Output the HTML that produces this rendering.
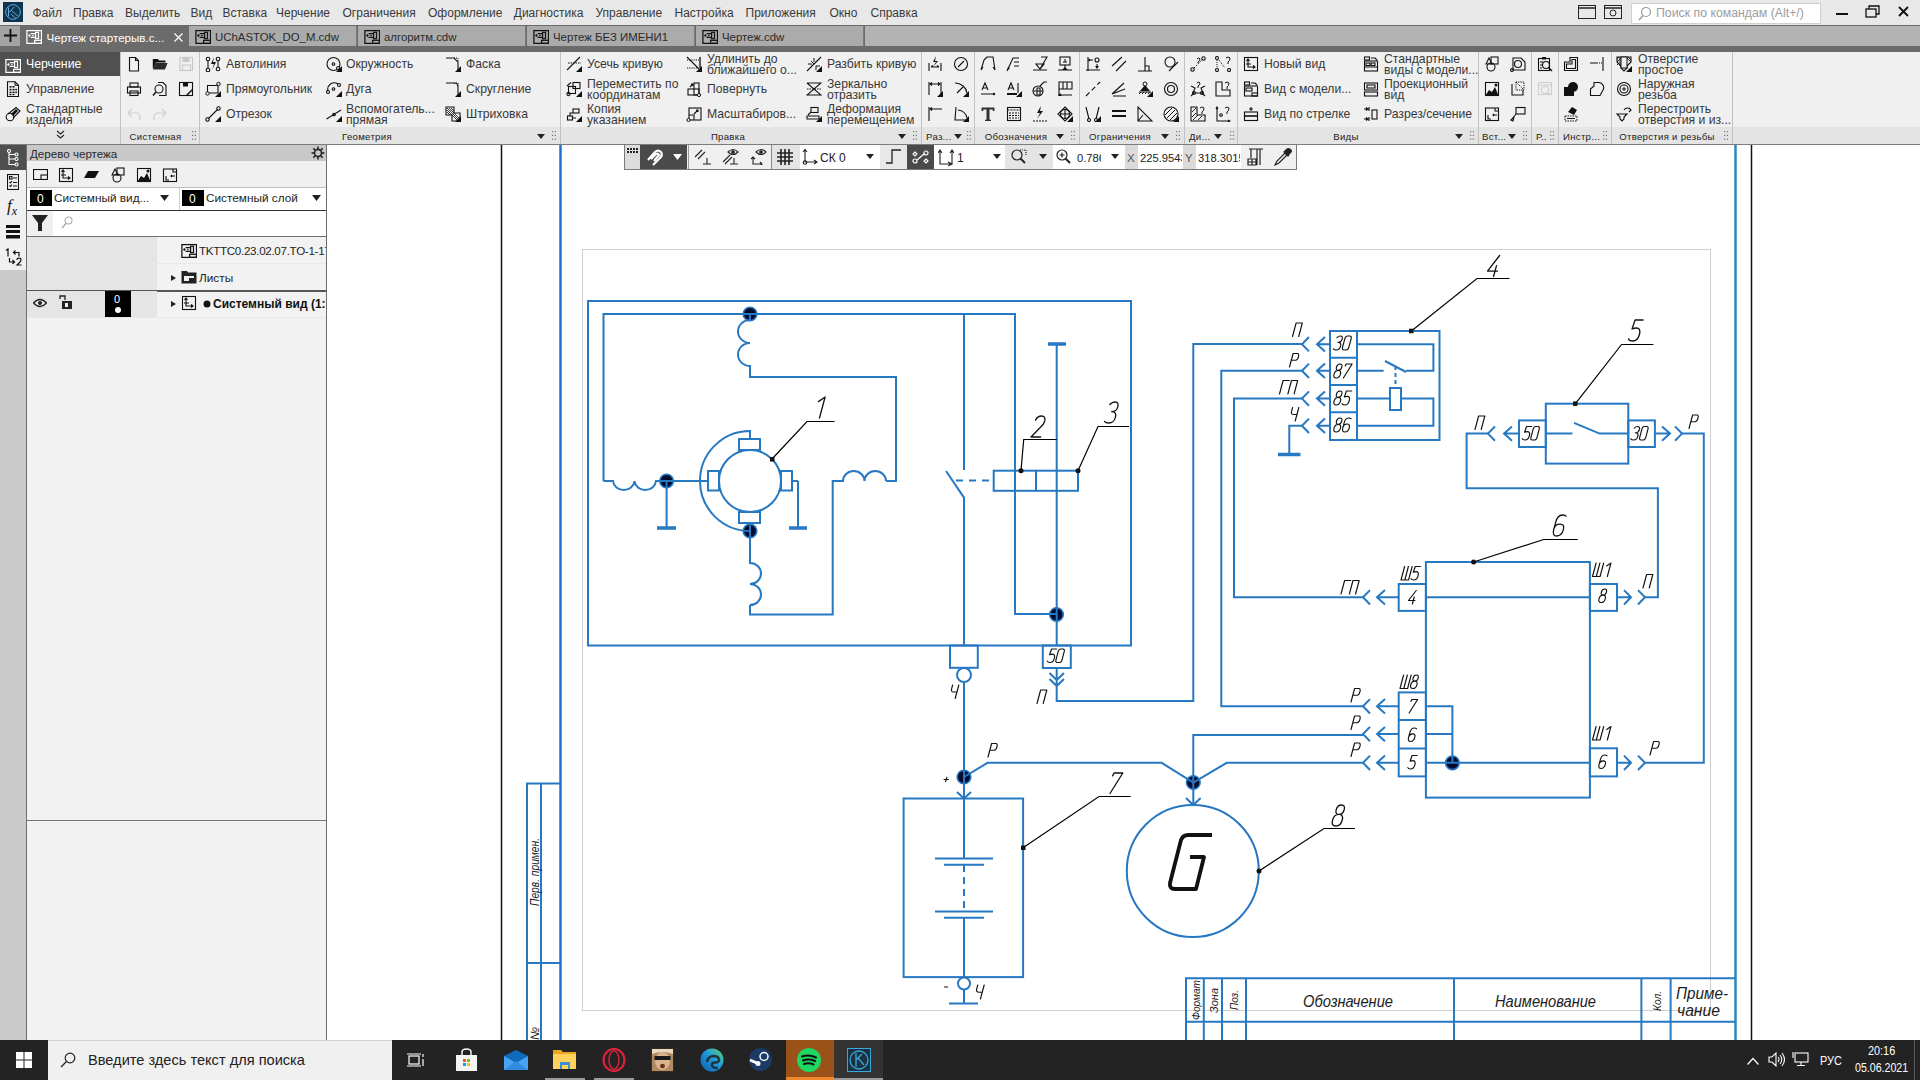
<!DOCTYPE html>
<html><head><meta charset="utf-8">
<style>
*{box-sizing:border-box}
html,body{margin:0;padding:0}
body{width:1920px;height:1080px;position:relative;overflow:hidden;font-family:"Liberation Sans",sans-serif;font-size:12px;color:#222;background:#fff}
.a{position:absolute}
</style></head><body>
<div class="a" style="left:327px;top:145px;width:1593px;height:895px;background:#fff"></div>

<svg id="dwg" width="1920" height="1080" style="position:absolute;left:0;top:0" viewBox="0 0 1920 1080">
<defs>
<style>
.b{stroke:#2778c2;stroke-width:2;fill:none}
.bt{stroke:#2778c2;stroke-width:3.5;fill:none}
.k{stroke:#000;stroke-width:1.2;fill:none}
.t{font-family:"Liberation Sans",sans-serif;font-style:italic;fill:#1a1a1a}
.nd{fill:#030b2e;stroke:#2778c2;stroke-width:1.6}
.dt{fill:#111}
</style>
</defs>
<!-- sheet frame -->
<line x1="501.5" y1="145" x2="501.5" y2="1040" stroke="#111" stroke-width="1.5"/>
<line x1="1751.5" y1="145" x2="1751.5" y2="1040" stroke="#111" stroke-width="1.5"/>
<line x1="560.5" y1="145" x2="560.5" y2="1040" stroke="#1f74d0" stroke-width="2.5"/>
<line x1="1735.5" y1="145" x2="1735.5" y2="1040" stroke="#2a88b8" stroke-width="2.5"/>
<rect x="582.5" y="249.5" width="1128" height="761" fill="none" stroke="#cfcfcf" stroke-width="1"/>
<!-- left stamp -->
<path class="b" d="M527 1040 V783.5 H560 M541 783.5 V1040 M527 963 H560"/>
<!-- nodes -->
<circle class="nd" cx="750" cy="314" r="6.8"/>
<circle class="nd" cx="666.6" cy="481" r="6.8"/>
<circle class="nd" cx="750" cy="531" r="6.8"/>
<circle class="nd" cx="1056.5" cy="614.5" r="6.8"/>
<circle class="nd" cx="964" cy="777" r="6.8"/>
<circle class="nd" cx="1193.3" cy="782.5" r="6.8"/>
<circle class="nd" cx="1452.4" cy="762.8" r="6.8"/>
<!-- BLOCK 1 -->
<rect class="b" x="588" y="301" width="543" height="344.5"/>
<path class="b" d="M603.5 481 V314 H1015 V614 H1056"/>
<!-- top coil -->
<path class="b" d="M750 314 V320 A12 11.5 0 0 0 750 343 A12 11.5 0 0 0 750 366 V377 H896 V481 H886"/>
<path class="b" d="M886 481 A10.7 10 0 0 0 864.5 481 A10.7 10 0 0 0 843 481 H832.7 V614.4 H750 V605"/>
<path class="b" d="M750 605 A11 10.5 0 0 0 750 584 A11 10.5 0 0 0 750 563 V523"/>
<path class="b" d="M603.5 481 H613 A10.8 10 0 0 0 634.5 481 A10.8 10 0 0 0 656 481 H708"/>
<path class="b" d="M666.6 481 V528 M798 481 V528 M792 481 H798"/>
<path class="bt" d="M657 528 H676 M789 528 H807"/>
<circle class="b" cx="750" cy="481" r="31"/>
<rect class="b" x="708" y="471" width="11" height="19.5"/>
<rect class="b" x="781" y="471" width="11" height="19.5"/>
<rect class="b" x="739" y="439" width="21" height="11"/>
<rect class="b" x="739" y="512" width="21" height="11"/>
<path class="b" d="M750 439 V431 A50 50 0 0 0 750 531"/>



<!-- switch -->
<path class="b" d="M964 314 V470 M946 471 L964 497.6 V645.5"/>
<path class="b" d="M956 480.6 H993.7" stroke-dasharray="7,6"/>
<path class="bt" d="M1048 344 H1066"/>
<path class="b" d="M1056.7 344 V645.5"/>
<rect class="b" x="993.7" y="470.7" width="84.3" height="20.1"/>
<path class="b" d="M1036 470.7 V490.8"/>

<!-- leaders 1,2,3 -->
<path class="k" d="M772 459 L807 421.5 H834.5 M1021 470.7 L1023.7 439.5 H1056.7 M1078 470.7 L1098 426.5 H1129"/>
<rect class="dt" x="770" y="457" width="4.5" height="4.5"/>
<circle class="dt" cx="1021" cy="470.7" r="2.5"/><circle class="dt" cx="1078" cy="470.7" r="2.5"/>
<!-- connectors below -->
<rect class="b" x="950" y="645.5" width="27.8" height="22.3"/>
<circle class="b" cx="964" cy="675" r="7"/>
<path class="b" d="M964 682 V777"/>
<rect class="b" x="1042.8" y="645.5" width="28" height="22.5"/>
<path class="b" d="M1049.5 673 L1056.7 680 L1064 673 M1049.5 679 L1056.7 686 L1064 679 M1056.7 668 V701 H1193.3 V344 H1302"/>
<!-- battery wires -->
<path class="b" d="M964 777 L987.5 762.8 H1161.7 L1193.3 782.5 L1226.7 762.8 H1363"/>
<path class="b" d="M1193.3 782.5 V735 H1363 M1193.3 782.5 V805"/>
<path class="b" d="M964 777 V798.5 M957 792 L964 798.5 L971 792 M1186 798 L1193.3 805 L1200.6 798"/>


<!-- BLOCK 7 battery -->
<rect class="b" x="903.6" y="798.5" width="119.5" height="178.6"/>
<path class="b" d="M964 798.5 V858.6 M935 858.6 H993 M944 864.8 H984 M935 911.5 H993 M944 917.7 H984 M964 917.7 V977"/>
<path class="b" d="M964 865 V911.5" stroke-dasharray="7,5"/>
<circle class="b" cx="964" cy="983.5" r="6"/>
<path class="b" d="M964 989.5 V1003.4 M949 1003.4 H978"/>
<path class="k" d="M1023 847.7 L1099 796.5 H1130.7"/>
<rect class="dt" x="1021" y="845.5" width="4.5" height="4.5"/>
<!-- BLOCK 8 generator -->
<circle class="b" cx="1192.8" cy="871" r="66"/>
<path d="M1212 835 H1188 Q1183 835 1181 840 L1170 883 Q1169 889 1175 889 H1196 L1204 857 H1190" stroke="#111" stroke-width="3.8" fill="none" stroke-linejoin="round"/>
<path class="k" d="M1259 871 L1324 828.5 H1355"/>
<circle class="dt" cx="1259" cy="871" r="2.5"/>
<!-- BLOCK 4 relay -->
<rect class="b" x="1330" y="331" width="109.5" height="109"/>
<path class="b" d="M1357 331 V440 M1330 357.8 H1357 M1330 385 H1357 M1330 412.2 H1357"/>
<path class="b" d="M1357 344.2 H1433.4 V370.8 H1406 M1357 370.8 H1383.6 M1385 361 L1406 372"/>
<path class="b" d="M1395.5 366 V388" stroke-dasharray="4,3"/>
<rect class="b" x="1390" y="388" width="11" height="22"/>
<path class="b" d="M1357 398.6 H1390 M1401 398.6 H1433.4 V425.8 H1357"/>
<!-- chevrons relay -->
<g class="b">
<path d="M1330 344.2 H1317 M1325 337 L1317 344.2 L1325 351.4 M1309 337 L1302 344.2 L1309 351.4"/>
<path d="M1330 370.8 H1317 M1325 363.6 L1317 370.8 L1325 378 M1309 363.6 L1302 370.8 L1309 378"/>
<path d="M1330 398.6 H1317 M1325 391.4 L1317 398.6 L1325 405.8 M1309 391.4 L1302 398.6 L1309 405.8"/>
<path d="M1330 425.8 H1317 M1325 418.6 L1317 425.8 L1325 433 M1309 418.6 L1302 425.8 L1309 433"/>
</g>
<path class="b" d="M1302 370.8 H1221.3 V706.3 H1363 M1302 398.6 H1234 V597.3 H1363 M1302 425.8 H1289.3 V454.5"/>
<path class="bt" d="M1278 454.5 H1300.5"/>
<path class="k" d="M1411.4 331 L1477 278.5 H1509.5"/>
<rect class="dt" x="1409" y="328.7" width="4.5" height="4.5"/>
<!-- BLOCK 5 -->
<rect class="b" x="1545.8" y="403.7" width="82.5" height="59.9"/>
<rect class="b" x="1519" y="420.4" width="26.8" height="26.6"/>
<rect class="b" x="1628.3" y="420.4" width="26.6" height="26.6"/>
<path class="b" d="M1545.8 433.6 H1572.4 M1574 422.8 L1599.6 433.6 H1628.3"/>
<g class="b">
<path d="M1519 433.6 H1504 M1512 426.4 L1504 433.6 L1512 440.8 M1495 426.4 L1488 433.6 L1495 440.8"/>
<path d="M1655 433.6 H1670 M1662 426.4 L1670 433.6 L1662 440.8 M1675 426.4 L1682 433.6 L1675 440.8"/>
</g>
<path class="b" d="M1488 433.6 H1466.6 V488.3 H1657.9 V597.3 H1645 M1682 433.6 H1703.8 V762.8 H1645"/>
<path class="k" d="M1575.4 403.7 L1621.6 344.5 H1653.4"/>
<rect class="dt" x="1573" y="401.4" width="4.5" height="4.5"/>
<!-- BLOCK 6 -->
<rect class="b" x="1425.9" y="562" width="164" height="235.6"/>
<rect class="b" x="1398.7" y="584" width="27.2" height="26.9"/>
<rect class="b" x="1589.9" y="584" width="27.1" height="26.9"/>
<path class="b" d="M1425.9 597.3 H1589.9"/>
<rect class="b" x="1398.7" y="692.4" width="27.2" height="84"/>
<path class="b" d="M1398.7 720 H1425.9 M1398.7 748.5 H1425.9"/>
<rect class="b" x="1589.9" y="748.3" width="27.1" height="28.1"/>
<path class="b" d="M1425.9 706.3 H1452.4 V762.8 M1425.9 734.1 H1452.4 M1425.9 762.8 H1589.9"/>

<g class="b">
<path d="M1398.7 597.3 H1377 M1385 590.1 L1377 597.3 L1385 604.5 M1370 590.1 L1363 597.3 L1370 604.5"/>
<path d="M1398.7 706.3 H1377 M1385 699.1 L1377 706.3 L1385 713.5 M1370 699.1 L1363 706.3 L1370 713.5"/>
<path d="M1398.7 734.1 H1377 M1385 726.9 L1377 734.1 L1385 741.3 M1370 726.9 L1363 734.1 L1370 741.3"/>
<path d="M1398.7 762.8 H1377 M1385 755.6 L1377 762.8 L1385 770 M1370 755.6 L1363 762.8 L1370 770"/>
<path d="M1617 597.3 H1631 M1624 590.1 L1631 597.3 L1624 604.5 M1638 590.1 L1645 597.3 L1638 604.5"/>
<path d="M1617 762.8 H1631 M1624 755.6 L1631 762.8 L1624 770 M1638 755.6 L1645 762.8 L1638 770"/>
</g>
<path class="k" d="M1473.6 562 L1543.7 539.5 H1577.8"/>
<circle class="dt" cx="1473.6" cy="562" r="2.5"/>
<!-- stamp table -->
<path class="b" d="M1186 1040 V978.3 H1735.3 M1186 1021.7 H1735.3 M1203.8 978.3 V1040 M1222 978.3 V1040 M1246 978.3 V1040 M1454 978.3 V1040 M1641.4 978.3 V1040 M1670.6 978.3 V1040"/>
</svg>

<svg class="a" style="left:0;top:0" width="1920" height="1080" viewBox="0 0 1920 1080"><g transform="translate(811.50 418.00) skewX(-15) scale(2.100) translate(0 -10)" fill="none" stroke="#111" stroke-width="1.3" vector-effect="non-scaling-stroke" stroke-linejoin="round" stroke-linecap="round"><path vector-effect="non-scaling-stroke" transform="translate(0.00 0)" d="M1.2 2.2 L3.8 0 V10"/></g>
<g transform="translate(1031.00 437.00) skewX(-15) scale(2.100) translate(0 -10)" fill="none" stroke="#111" stroke-width="1.3" vector-effect="non-scaling-stroke" stroke-linejoin="round" stroke-linecap="round"><path vector-effect="non-scaling-stroke" transform="translate(0.00 0)" d="M0 2 Q0.4 0 2.3 0 Q4.5 0 4.5 2.5 Q4.5 4 3.2 5.5 L0 10 H4.6"/></g>
<g transform="translate(1104.00 423.00) skewX(-15) scale(2.100) translate(0 -10)" fill="none" stroke="#111" stroke-width="1.3" vector-effect="non-scaling-stroke" stroke-linejoin="round" stroke-linecap="round"><path vector-effect="non-scaling-stroke" transform="translate(0.00 0)" d="M0.4 1.2 Q1.2 0 2.6 0 Q4.5 0 4.5 2.3 Q4.5 4.6 2.2 4.6 Q4.7 4.6 4.7 7.3 Q4.7 10 2.3 10 Q0.8 10 0 9.2"/></g>
<g transform="translate(1486.00 276.50) skewX(-15) scale(2.100) translate(0 -10)" fill="none" stroke="#111" stroke-width="1.3" vector-effect="non-scaling-stroke" stroke-linejoin="round" stroke-linecap="round"><path vector-effect="non-scaling-stroke" transform="translate(0.00 0)" d="M3.8 0 L0 7.4 H4.8 M3.6 4.8 V10"/></g>
<g transform="translate(1628.00 341.00) skewX(-15) scale(2.100) translate(0 -10)" fill="none" stroke="#111" stroke-width="1.3" vector-effect="non-scaling-stroke" stroke-linejoin="round" stroke-linecap="round"><path vector-effect="non-scaling-stroke" transform="translate(0.00 0)" d="M4.5 0 H0.7 L0.4 4.3 Q1.3 3.8 2.3 3.8 Q4.6 3.8 4.6 6.9 Q4.6 10 2.3 10 Q0.5 10 0 9"/></g>
<g transform="translate(1552.00 536.00) skewX(-15) scale(2.100) translate(0 -10)" fill="none" stroke="#111" stroke-width="1.3" vector-effect="non-scaling-stroke" stroke-linejoin="round" stroke-linecap="round"><path vector-effect="non-scaling-stroke" transform="translate(0.00 0)" d="M4.2 0.6 Q3.7 0 2.3 0 Q0 0 0 3.5 V7 Q0 10 2.3 10 Q4.6 10 4.6 7 Q4.6 4.3 2.3 4.3 Q0 4.3 0 6.5"/></g>
<g transform="translate(1107.50 793.50) skewX(-15) scale(2.050) translate(0 -10)" fill="none" stroke="#111" stroke-width="1.3" vector-effect="non-scaling-stroke" stroke-linejoin="round" stroke-linecap="round"><path vector-effect="non-scaling-stroke" transform="translate(0.00 0)" d="M0.2 1.4 L0.5 0 H4.8 L1.2 10"/></g>
<g transform="translate(1331.00 826.00) skewX(-15) scale(2.100) translate(0 -10)" fill="none" stroke="#111" stroke-width="1.3" vector-effect="non-scaling-stroke" stroke-linejoin="round" stroke-linecap="round"><path vector-effect="non-scaling-stroke" transform="translate(0.00 0)" d="M2.3 4.5 Q0.4 4.5 0.4 2.25 Q0.4 0 2.3 0 Q4.2 0 4.2 2.25 Q4.2 4.5 2.3 4.5 Q0 4.5 0 7.25 Q0 10 2.3 10 Q4.6 10 4.6 7.25 Q4.6 4.5 2.3 4.5 Z"/></g>
<g transform="translate(1292.50 336.50) skewX(-15) scale(1.350) translate(0 -10)" fill="none" stroke="#111" stroke-width="1.15" vector-effect="non-scaling-stroke" stroke-linejoin="round" stroke-linecap="round"><path vector-effect="non-scaling-stroke" transform="translate(0.00 0)" d="M0 10 V0 H4.6 V10"/></g>
<g transform="translate(1289.50 367.00) skewX(-15) scale(1.350) translate(0 -10)" fill="none" stroke="#111" stroke-width="1.15" vector-effect="non-scaling-stroke" stroke-linejoin="round" stroke-linecap="round"><path vector-effect="non-scaling-stroke" transform="translate(0.00 0)" d="M0 10 V0 H3.2 Q4.6 0 4.6 2.5 Q4.6 5 3.2 5 H0"/></g>
<g transform="translate(1279.50 394.00) skewX(-15) scale(1.350) translate(0 -10)" fill="none" stroke="#111" stroke-width="1.15" vector-effect="non-scaling-stroke" stroke-linejoin="round" stroke-linecap="round"><path vector-effect="non-scaling-stroke" transform="translate(0.00 0)" d="M0 10 V0 H4.6"/><path vector-effect="non-scaling-stroke" transform="translate(6.20 0)" d="M0 10 V0 H4.6 V10"/></g>
<g transform="translate(1289.00 421.00) skewX(-15) scale(1.350) translate(0 -10)" fill="none" stroke="#111" stroke-width="1.15" vector-effect="non-scaling-stroke" stroke-linejoin="round" stroke-linecap="round"><path vector-effect="non-scaling-stroke" transform="translate(0.00 0)" d="M0 0 V2.8 Q0 5.2 2.3 5.2 H4.6 M4.6 0 V10"/></g>
<g transform="translate(1333.00 350.00) skewX(-15) scale(1.400) translate(0 -10)" fill="none" stroke="#111" stroke-width="1.15" vector-effect="non-scaling-stroke" stroke-linejoin="round" stroke-linecap="round"><path vector-effect="non-scaling-stroke" transform="translate(0.00 0)" d="M0.4 1.2 Q1.2 0 2.6 0 Q4.5 0 4.5 2.3 Q4.5 4.6 2.2 4.6 Q4.7 4.6 4.7 7.3 Q4.7 10 2.3 10 Q0.8 10 0 9.2"/><path vector-effect="non-scaling-stroke" transform="translate(6.30 0)" d="M1.4 0 H3.1 Q4.5 0 4.5 2 V8 Q4.5 10 3.1 10 H1.4 Q0 10 0 8 V2 Q0 0 1.4 0 Z"/></g>
<g transform="translate(1333.00 378.00) skewX(-15) scale(1.400) translate(0 -10)" fill="none" stroke="#111" stroke-width="1.15" vector-effect="non-scaling-stroke" stroke-linejoin="round" stroke-linecap="round"><path vector-effect="non-scaling-stroke" transform="translate(0.00 0)" d="M2.3 4.5 Q0.4 4.5 0.4 2.25 Q0.4 0 2.3 0 Q4.2 0 4.2 2.25 Q4.2 4.5 2.3 4.5 Q0 4.5 0 7.25 Q0 10 2.3 10 Q4.6 10 4.6 7.25 Q4.6 4.5 2.3 4.5 Z"/><path vector-effect="non-scaling-stroke" transform="translate(6.20 0)" d="M0.2 1.4 L0.5 0 H4.8 L1.2 10"/></g>
<g transform="translate(1333.00 405.00) skewX(-15) scale(1.400) translate(0 -10)" fill="none" stroke="#111" stroke-width="1.15" vector-effect="non-scaling-stroke" stroke-linejoin="round" stroke-linecap="round"><path vector-effect="non-scaling-stroke" transform="translate(0.00 0)" d="M2.3 4.5 Q0.4 4.5 0.4 2.25 Q0.4 0 2.3 0 Q4.2 0 4.2 2.25 Q4.2 4.5 2.3 4.5 Q0 4.5 0 7.25 Q0 10 2.3 10 Q4.6 10 4.6 7.25 Q4.6 4.5 2.3 4.5 Z"/><path vector-effect="non-scaling-stroke" transform="translate(6.20 0)" d="M4.5 0 H0.7 L0.4 4.3 Q1.3 3.8 2.3 3.8 Q4.6 3.8 4.6 6.9 Q4.6 10 2.3 10 Q0.5 10 0 9"/></g>
<g transform="translate(1333.00 432.00) skewX(-15) scale(1.400) translate(0 -10)" fill="none" stroke="#111" stroke-width="1.15" vector-effect="non-scaling-stroke" stroke-linejoin="round" stroke-linecap="round"><path vector-effect="non-scaling-stroke" transform="translate(0.00 0)" d="M2.3 4.5 Q0.4 4.5 0.4 2.25 Q0.4 0 2.3 0 Q4.2 0 4.2 2.25 Q4.2 4.5 2.3 4.5 Q0 4.5 0 7.25 Q0 10 2.3 10 Q4.6 10 4.6 7.25 Q4.6 4.5 2.3 4.5 Z"/><path vector-effect="non-scaling-stroke" transform="translate(6.20 0)" d="M4.2 0.6 Q3.7 0 2.3 0 Q0 0 0 3.5 V7 Q0 10 2.3 10 Q4.6 10 4.6 7 Q4.6 4.3 2.3 4.3 Q0 4.3 0 6.5"/></g>
<g transform="translate(1475.00 429.50) skewX(-15) scale(1.350) translate(0 -10)" fill="none" stroke="#111" stroke-width="1.15" vector-effect="non-scaling-stroke" stroke-linejoin="round" stroke-linecap="round"><path vector-effect="non-scaling-stroke" transform="translate(0.00 0)" d="M0 10 V0 H4.6 V10"/></g>
<g transform="translate(1522.00 440.00) skewX(-15) scale(1.350) translate(0 -10)" fill="none" stroke="#111" stroke-width="1.15" vector-effect="non-scaling-stroke" stroke-linejoin="round" stroke-linecap="round"><path vector-effect="non-scaling-stroke" transform="translate(0.00 0)" d="M4.5 0 H0.7 L0.4 4.3 Q1.3 3.8 2.3 3.8 Q4.6 3.8 4.6 6.9 Q4.6 10 2.3 10 Q0.5 10 0 9"/><path vector-effect="non-scaling-stroke" transform="translate(6.10 0)" d="M1.4 0 H3.1 Q4.5 0 4.5 2 V8 Q4.5 10 3.1 10 H1.4 Q0 10 0 8 V2 Q0 0 1.4 0 Z"/></g>
<g transform="translate(1630.50 440.00) skewX(-15) scale(1.350) translate(0 -10)" fill="none" stroke="#111" stroke-width="1.15" vector-effect="non-scaling-stroke" stroke-linejoin="round" stroke-linecap="round"><path vector-effect="non-scaling-stroke" transform="translate(0.00 0)" d="M0.4 1.2 Q1.2 0 2.6 0 Q4.5 0 4.5 2.3 Q4.5 4.6 2.2 4.6 Q4.7 4.6 4.7 7.3 Q4.7 10 2.3 10 Q0.8 10 0 9.2"/><path vector-effect="non-scaling-stroke" transform="translate(6.30 0)" d="M1.4 0 H3.1 Q4.5 0 4.5 2 V8 Q4.5 10 3.1 10 H1.4 Q0 10 0 8 V2 Q0 0 1.4 0 Z"/></g>
<g transform="translate(1689.00 428.50) skewX(-15) scale(1.350) translate(0 -10)" fill="none" stroke="#111" stroke-width="1.15" vector-effect="non-scaling-stroke" stroke-linejoin="round" stroke-linecap="round"><path vector-effect="non-scaling-stroke" transform="translate(0.00 0)" d="M0 10 V0 H3.2 Q4.6 0 4.6 2.5 Q4.6 5 3.2 5 H0"/></g>
<g transform="translate(1401.00 580.00) skewX(-15) scale(1.350) translate(0 -10)" fill="none" stroke="#111" stroke-width="1.15" vector-effect="non-scaling-stroke" stroke-linejoin="round" stroke-linecap="round"><path vector-effect="non-scaling-stroke" transform="translate(0.00 0)" d="M0 0 V10 H5.6 V0 M2.8 0 V10"/><path vector-effect="non-scaling-stroke" transform="translate(7.20 0)" d="M4.5 0 H0.7 L0.4 4.3 Q1.3 3.8 2.3 3.8 Q4.6 3.8 4.6 6.9 Q4.6 10 2.3 10 Q0.5 10 0 9"/></g>
<g transform="translate(1407.50 604.00) skewX(-15) scale(1.350) translate(0 -10)" fill="none" stroke="#111" stroke-width="1.15" vector-effect="non-scaling-stroke" stroke-linejoin="round" stroke-linecap="round"><path vector-effect="non-scaling-stroke" transform="translate(0.00 0)" d="M3.8 0 L0 7.4 H4.8 M3.6 4.8 V10"/></g>
<g transform="translate(1341.00 594.00) skewX(-15) scale(1.350) translate(0 -10)" fill="none" stroke="#111" stroke-width="1.15" vector-effect="non-scaling-stroke" stroke-linejoin="round" stroke-linecap="round"><path vector-effect="non-scaling-stroke" transform="translate(0.00 0)" d="M0 10 V0 H4.6"/><path vector-effect="non-scaling-stroke" transform="translate(6.20 0)" d="M0 10 V0 H4.6 V10"/></g>
<g transform="translate(1592.50 576.50) skewX(-15) scale(1.350) translate(0 -10)" fill="none" stroke="#111" stroke-width="1.15" vector-effect="non-scaling-stroke" stroke-linejoin="round" stroke-linecap="round"><path vector-effect="non-scaling-stroke" transform="translate(0.00 0)" d="M0 0 V10 H5.6 V0 M2.8 0 V10"/><path vector-effect="non-scaling-stroke" transform="translate(7.20 0)" d="M1.2 2.2 L3.8 0 V10"/></g>
<g transform="translate(1598.00 602.50) skewX(-15) scale(1.350) translate(0 -10)" fill="none" stroke="#111" stroke-width="1.15" vector-effect="non-scaling-stroke" stroke-linejoin="round" stroke-linecap="round"><path vector-effect="non-scaling-stroke" transform="translate(0.00 0)" d="M2.3 4.5 Q0.4 4.5 0.4 2.25 Q0.4 0 2.3 0 Q4.2 0 4.2 2.25 Q4.2 4.5 2.3 4.5 Q0 4.5 0 7.25 Q0 10 2.3 10 Q4.6 10 4.6 7.25 Q4.6 4.5 2.3 4.5 Z"/></g>
<g transform="translate(1643.00 588.00) skewX(-15) scale(1.350) translate(0 -10)" fill="none" stroke="#111" stroke-width="1.15" vector-effect="non-scaling-stroke" stroke-linejoin="round" stroke-linecap="round"><path vector-effect="non-scaling-stroke" transform="translate(0.00 0)" d="M0 10 V0 H4.6 V10"/></g>
<g transform="translate(1400.00 688.50) skewX(-15) scale(1.350) translate(0 -10)" fill="none" stroke="#111" stroke-width="1.15" vector-effect="non-scaling-stroke" stroke-linejoin="round" stroke-linecap="round"><path vector-effect="non-scaling-stroke" transform="translate(0.00 0)" d="M0 0 V10 H5.6 V0 M2.8 0 V10"/><path vector-effect="non-scaling-stroke" transform="translate(7.20 0)" d="M2.3 4.5 Q0.4 4.5 0.4 2.25 Q0.4 0 2.3 0 Q4.2 0 4.2 2.25 Q4.2 4.5 2.3 4.5 Q0 4.5 0 7.25 Q0 10 2.3 10 Q4.6 10 4.6 7.25 Q4.6 4.5 2.3 4.5 Z"/></g>
<g transform="translate(1407.50 713.00) skewX(-15) scale(1.350) translate(0 -10)" fill="none" stroke="#111" stroke-width="1.15" vector-effect="non-scaling-stroke" stroke-linejoin="round" stroke-linecap="round"><path vector-effect="non-scaling-stroke" transform="translate(0.00 0)" d="M0.2 1.4 L0.5 0 H4.8 L1.2 10"/></g>
<g transform="translate(1407.50 741.50) skewX(-15) scale(1.350) translate(0 -10)" fill="none" stroke="#111" stroke-width="1.15" vector-effect="non-scaling-stroke" stroke-linejoin="round" stroke-linecap="round"><path vector-effect="non-scaling-stroke" transform="translate(0.00 0)" d="M4.2 0.6 Q3.7 0 2.3 0 Q0 0 0 3.5 V7 Q0 10 2.3 10 Q4.6 10 4.6 7 Q4.6 4.3 2.3 4.3 Q0 4.3 0 6.5"/></g>
<g transform="translate(1407.50 769.00) skewX(-15) scale(1.350) translate(0 -10)" fill="none" stroke="#111" stroke-width="1.15" vector-effect="non-scaling-stroke" stroke-linejoin="round" stroke-linecap="round"><path vector-effect="non-scaling-stroke" transform="translate(0.00 0)" d="M4.5 0 H0.7 L0.4 4.3 Q1.3 3.8 2.3 3.8 Q4.6 3.8 4.6 6.9 Q4.6 10 2.3 10 Q0.5 10 0 9"/></g>
<g transform="translate(1351.00 702.00) skewX(-15) scale(1.350) translate(0 -10)" fill="none" stroke="#111" stroke-width="1.15" vector-effect="non-scaling-stroke" stroke-linejoin="round" stroke-linecap="round"><path vector-effect="non-scaling-stroke" transform="translate(0.00 0)" d="M0 10 V0 H3.2 Q4.6 0 4.6 2.5 Q4.6 5 3.2 5 H0"/></g>
<g transform="translate(1351.00 729.50) skewX(-15) scale(1.350) translate(0 -10)" fill="none" stroke="#111" stroke-width="1.15" vector-effect="non-scaling-stroke" stroke-linejoin="round" stroke-linecap="round"><path vector-effect="non-scaling-stroke" transform="translate(0.00 0)" d="M0 10 V0 H3.2 Q4.6 0 4.6 2.5 Q4.6 5 3.2 5 H0"/></g>
<g transform="translate(1351.00 756.50) skewX(-15) scale(1.350) translate(0 -10)" fill="none" stroke="#111" stroke-width="1.15" vector-effect="non-scaling-stroke" stroke-linejoin="round" stroke-linecap="round"><path vector-effect="non-scaling-stroke" transform="translate(0.00 0)" d="M0 10 V0 H3.2 Q4.6 0 4.6 2.5 Q4.6 5 3.2 5 H0"/></g>
<g transform="translate(1592.50 740.00) skewX(-15) scale(1.350) translate(0 -10)" fill="none" stroke="#111" stroke-width="1.15" vector-effect="non-scaling-stroke" stroke-linejoin="round" stroke-linecap="round"><path vector-effect="non-scaling-stroke" transform="translate(0.00 0)" d="M0 0 V10 H5.6 V0 M2.8 0 V10"/><path vector-effect="non-scaling-stroke" transform="translate(7.20 0)" d="M1.2 2.2 L3.8 0 V10"/></g>
<g transform="translate(1598.00 768.50) skewX(-15) scale(1.350) translate(0 -10)" fill="none" stroke="#111" stroke-width="1.15" vector-effect="non-scaling-stroke" stroke-linejoin="round" stroke-linecap="round"><path vector-effect="non-scaling-stroke" transform="translate(0.00 0)" d="M4.2 0.6 Q3.7 0 2.3 0 Q0 0 0 3.5 V7 Q0 10 2.3 10 Q4.6 10 4.6 7 Q4.6 4.3 2.3 4.3 Q0 4.3 0 6.5"/></g>
<g transform="translate(1650.00 755.00) skewX(-15) scale(1.350) translate(0 -10)" fill="none" stroke="#111" stroke-width="1.15" vector-effect="non-scaling-stroke" stroke-linejoin="round" stroke-linecap="round"><path vector-effect="non-scaling-stroke" transform="translate(0.00 0)" d="M0 10 V0 H3.2 Q4.6 0 4.6 2.5 Q4.6 5 3.2 5 H0"/></g>
<g transform="translate(1047.00 662.50) skewX(-15) scale(1.350) translate(0 -10)" fill="none" stroke="#111" stroke-width="1.15" vector-effect="non-scaling-stroke" stroke-linejoin="round" stroke-linecap="round"><path vector-effect="non-scaling-stroke" transform="translate(0.00 0)" d="M4.5 0 H0.7 L0.4 4.3 Q1.3 3.8 2.3 3.8 Q4.6 3.8 4.6 6.9 Q4.6 10 2.3 10 Q0.5 10 0 9"/><path vector-effect="non-scaling-stroke" transform="translate(6.10 0)" d="M1.4 0 H3.1 Q4.5 0 4.5 2 V8 Q4.5 10 3.1 10 H1.4 Q0 10 0 8 V2 Q0 0 1.4 0 Z"/></g>
<g transform="translate(949.00 698.50) skewX(-15) scale(1.350) translate(0 -10)" fill="none" stroke="#111" stroke-width="1.15" vector-effect="non-scaling-stroke" stroke-linejoin="round" stroke-linecap="round"><path vector-effect="non-scaling-stroke" transform="translate(0.00 0)" d="M0 0 V2.8 Q0 5.2 2.3 5.2 H4.6 M4.6 0 V10"/></g>
<g transform="translate(1037.00 703.50) skewX(-15) scale(1.350) translate(0 -10)" fill="none" stroke="#111" stroke-width="1.15" vector-effect="non-scaling-stroke" stroke-linejoin="round" stroke-linecap="round"><path vector-effect="non-scaling-stroke" transform="translate(0.00 0)" d="M0 10 V0 H4.6 V10"/></g>
<g transform="translate(988.00 757.00) skewX(-15) scale(1.350) translate(0 -10)" fill="none" stroke="#111" stroke-width="1.15" vector-effect="non-scaling-stroke" stroke-linejoin="round" stroke-linecap="round"><path vector-effect="non-scaling-stroke" transform="translate(0.00 0)" d="M0 10 V0 H3.2 Q4.6 0 4.6 2.5 Q4.6 5 3.2 5 H0"/></g>
<g transform="translate(942.00 785.00) skewX(-15) scale(1.100) translate(0 -10)" fill="none" stroke="#111" stroke-width="1.15" vector-effect="non-scaling-stroke" stroke-linejoin="round" stroke-linecap="round"><path vector-effect="non-scaling-stroke" transform="translate(0.00 0)" d="M0.5 5 H4.5 M2.5 3 V7"/></g>
<g transform="translate(943.00 991.00) skewX(-15) scale(0.800) translate(0 -10)" fill="none" stroke="#111" stroke-width="1.15" vector-effect="non-scaling-stroke" stroke-linejoin="round" stroke-linecap="round"><path vector-effect="non-scaling-stroke" transform="translate(0.00 0)" d="M0.5 5 H4.5"/></g>
<g transform="translate(974.00 999.00) skewX(-15) scale(1.400) translate(0 -10)" fill="none" stroke="#111" stroke-width="1.15" vector-effect="non-scaling-stroke" stroke-linejoin="round" stroke-linecap="round"><path vector-effect="non-scaling-stroke" transform="translate(0.00 0)" d="M0 0 V2.8 Q0 5.2 2.3 5.2 H4.6 M4.6 0 V10"/></g>
<text transform="translate(539 906) rotate(-90)" font-family="Liberation Sans" font-style="italic" font-size="12" fill="#222" textLength="68" lengthAdjust="spacingAndGlyphs">Перв. примен.</text>
<text transform="translate(539 1040) rotate(-90)" font-family="Liberation Sans" font-style="italic" font-size="12" fill="#222">№</text>
<text transform="translate(1200 1020) rotate(-90)" font-family="Liberation Sans" font-style="italic" font-size="10.5" fill="#222" textLength="40" lengthAdjust="spacingAndGlyphs">Формат</text>
<text transform="translate(1218 1013) rotate(-90)" font-family="Liberation Sans" font-style="italic" font-size="10.5" fill="#222" textLength="25" lengthAdjust="spacingAndGlyphs">Зона</text>
<text transform="translate(1238 1010) rotate(-90)" font-family="Liberation Sans" font-style="italic" font-size="10.5" fill="#222" textLength="20" lengthAdjust="spacingAndGlyphs">Поз.</text>
<text x="1303" y="1007" font-family="Liberation Sans" font-style="italic" font-size="16" fill="#222" textLength="90" lengthAdjust="spacingAndGlyphs" text-anchor="start">Обозначение</text>
<text x="1495" y="1007" font-family="Liberation Sans" font-style="italic" font-size="16" fill="#222" textLength="101" lengthAdjust="spacingAndGlyphs" text-anchor="start">Наименование</text>
<text transform="translate(1661 1011) rotate(-90)" font-family="Liberation Sans" font-style="italic" font-size="10.5" fill="#222" textLength="20" lengthAdjust="spacingAndGlyphs">Кол.</text>
<text x="1676" y="999" font-family="Liberation Sans" font-style="italic" font-size="16" fill="#222" textLength="52" lengthAdjust="spacingAndGlyphs" text-anchor="start">Приме-</text>
<text x="1677" y="1016" font-family="Liberation Sans" font-style="italic" font-size="16" fill="#222" textLength="43" lengthAdjust="spacingAndGlyphs" text-anchor="start">чание</text></svg>
<div class="a" style="left:0;top:0;width:1920px;height:25px;background:#e8e8e8"></div>
<svg class="a" style="left:3px;top:2px;width:20px;height:20px" viewBox="0 0 20 20"><rect width="20" height="20" fill="#0e3550"/><circle cx="10" cy="10" r="7.3" fill="none" stroke="#62acd4" stroke-width="1"/><path d="M5.5 5.5 V14.5 M5.5 11 L11.5 4.8 M8.5 8.5 L15.5 14.5 M8 12 L13 16.5" stroke="#62acd4" stroke-width="1" fill="none"/></svg>
<span class="a" style="left:32.5px;top:7px;font-size:12px;color:#3a3a3a;white-space:nowrap;line-height:1">Файл</span>
<span class="a" style="left:73px;top:7px;font-size:12px;color:#3a3a3a;white-space:nowrap;line-height:1">Правка</span>
<span class="a" style="left:125px;top:7px;font-size:12px;color:#3a3a3a;white-space:nowrap;line-height:1">Выделить</span>
<span class="a" style="left:190.5px;top:7px;font-size:12px;color:#3a3a3a;white-space:nowrap;line-height:1">Вид</span>
<span class="a" style="left:222.5px;top:7px;font-size:12px;color:#3a3a3a;white-space:nowrap;line-height:1">Вставка</span>
<span class="a" style="left:276px;top:7px;font-size:12px;color:#3a3a3a;white-space:nowrap;line-height:1">Черчение</span>
<span class="a" style="left:342.5px;top:7px;font-size:12px;color:#3a3a3a;white-space:nowrap;line-height:1">Ограничения</span>
<span class="a" style="left:428px;top:7px;font-size:12px;color:#3a3a3a;white-space:nowrap;line-height:1">Оформление</span>
<span class="a" style="left:513.75px;top:7px;font-size:12px;color:#3a3a3a;white-space:nowrap;line-height:1">Диагностика</span>
<span class="a" style="left:595.5px;top:7px;font-size:12px;color:#3a3a3a;white-space:nowrap;line-height:1">Управление</span>
<span class="a" style="left:674.5px;top:7px;font-size:12px;color:#3a3a3a;white-space:nowrap;line-height:1">Настройка</span>
<span class="a" style="left:745.5px;top:7px;font-size:12px;color:#3a3a3a;white-space:nowrap;line-height:1">Приложения</span>
<span class="a" style="left:829.5px;top:7px;font-size:12px;color:#3a3a3a;white-space:nowrap;line-height:1">Окно</span>
<span class="a" style="left:870.5px;top:7px;font-size:12px;color:#3a3a3a;white-space:nowrap;line-height:1">Справка</span>
<svg class="a" style="left:1578px;top:5px;width:18px;height:14px" viewBox="0 0 18 14"><rect x="0.5" y="0.5" width="17" height="13" fill="none" stroke="#222"/><path d="M0.5 3 H17.5" stroke="#222" stroke-width="1.5"/></svg>
<svg class="a" style="left:1604px;top:5px;width:18px;height:14px" viewBox="0 0 18 14"><rect x="0.5" y="0.5" width="17" height="13" fill="none" stroke="#222"/><path d="M0.5 3 H17.5" stroke="#222" stroke-width="1.5"/><circle cx="9" cy="8" r="3" fill="none" stroke="#222"/></svg>
<div class="a" style="left:1631px;top:3px;width:190px;height:21px;background:#fff;border:1px solid #cfcfcf"></div>
<svg class="a" style="left:1638px;top:6px;width:14px;height:16px" viewBox="0 0 14 16"><circle cx="8" cy="6" r="4.5" fill="none" stroke="#999" stroke-width="1.2"/><path d="M5 9.5 L1 14" stroke="#999" stroke-width="1.5"/></svg>
<span class="a" style="left:1656px;top:7px;font-size:12.3px;color:#9c9c9c;white-space:nowrap;line-height:1;">Поиск по командам (Alt+/)</span>
<div class="a" style="left:1836px;top:13px;width:12px;height:2px;background:#111"></div>
<svg class="a" style="left:1865px;top:5px;width:16px;height:13px" viewBox="0 0 16 13"><rect x="1" y="4" width="10" height="8" fill="none" stroke="#111" stroke-width="1.3"/><path d="M4 4 V1 H14 V9 H11" fill="none" stroke="#111" stroke-width="1.3"/></svg>
<svg class="a" style="left:1898px;top:6px;width:11px;height:11px" viewBox="0 0 11 11"><path d="M1 1 L10 10 M10 1 L1 10" stroke="#111" stroke-width="1.8"/></svg>
<div class="a" style="left:0;top:25px;width:1920px;height:27px;background:#6b6b6b"></div>
<div class="a" style="left:865px;top:26px;width:1055px;height:20px;background:#b3b3b3"></div>
<div class="a" style="left:0;top:26px;width:20px;height:20px;background:#a3a3a3"></div>
<svg class="a" style="left:4px;top:29px;width:13px;height:13px" viewBox="0 0 13 13"><path d="M6.5 0 V13 M0 6.5 H13" stroke="#111" stroke-width="1.8"/></svg>
<svg class="a" style="left:26px;top:28px;width:16px;height:16px" viewBox="0 0 16 16"><g stroke="#fff" stroke-width="1.25" fill="none"><rect x="0.9" y="2.6" width="14.6" height="12.8"/><rect x="8.6" y="12.3" width="6.9" height="3.1"/><rect x="9.6" y="4.3" width="2.9" height="6.3"/><path d="M4.6 5.7 H9.6 M4.6 9.3 H9.6"/></g><path d="M2 7.5 L3.4 6.1 L4.8 7.5 L3.4 8.9Z" fill="#fff"/><circle cx="6.9" cy="7.5" r="0.8" fill="#fff"/></svg>
<span class="a" style="left:46.5px;top:32px;font-size:11.6px;color:#fff;white-space:nowrap;line-height:1;">Чертеж стартерыв.c...</span>
<svg class="a" style="left:174px;top:33px;width:9px;height:9px" viewBox="0 0 9 9"><path d="M0.5 0.5 L8.5 8.5 M8.5 0.5 L0.5 8.5" stroke="#fff" stroke-width="1.2"/></svg>
<div class="a" style="left:189px;top:26px;width:168px;height:20px;background:#ababab;border-right:1px solid #7a7a7a"></div>
<svg class="a" style="left:195px;top:28px;width:16px;height:16px" viewBox="0 0 16 16"><g stroke="#111" stroke-width="1.25" fill="none"><rect x="0.9" y="2.6" width="14.6" height="12.8"/><rect x="8.6" y="12.3" width="6.9" height="3.1"/><rect x="9.6" y="4.3" width="2.9" height="6.3"/><path d="M4.6 5.7 H9.6 M4.6 9.3 H9.6"/></g><path d="M2 7.5 L3.4 6.1 L4.8 7.5 L3.4 8.9Z" fill="#111"/><circle cx="6.9" cy="7.5" r="0.8" fill="#111"/></svg>
<span class="a" style="left:215px;top:32px;font-size:11.4px;color:#2a2a2a;white-space:nowrap;line-height:1;">UChASTOK_DO_M.cdw</span>
<div class="a" style="left:358px;top:26px;width:168px;height:20px;background:#ababab;border-right:1px solid #7a7a7a"></div>
<svg class="a" style="left:364px;top:28px;width:16px;height:16px" viewBox="0 0 16 16"><g stroke="#111" stroke-width="1.25" fill="none"><rect x="0.9" y="2.6" width="14.6" height="12.8"/><rect x="8.6" y="12.3" width="6.9" height="3.1"/><rect x="9.6" y="4.3" width="2.9" height="6.3"/><path d="M4.6 5.7 H9.6 M4.6 9.3 H9.6"/></g><path d="M2 7.5 L3.4 6.1 L4.8 7.5 L3.4 8.9Z" fill="#111"/><circle cx="6.9" cy="7.5" r="0.8" fill="#111"/></svg>
<span class="a" style="left:384px;top:32px;font-size:11.4px;color:#2a2a2a;white-space:nowrap;line-height:1;">алгоритм.cdw</span>
<div class="a" style="left:527px;top:26px;width:168px;height:20px;background:#ababab;border-right:1px solid #7a7a7a"></div>
<svg class="a" style="left:533px;top:28px;width:16px;height:16px" viewBox="0 0 16 16"><g stroke="#111" stroke-width="1.25" fill="none"><rect x="0.9" y="2.6" width="14.6" height="12.8"/><rect x="8.6" y="12.3" width="6.9" height="3.1"/><rect x="9.6" y="4.3" width="2.9" height="6.3"/><path d="M4.6 5.7 H9.6 M4.6 9.3 H9.6"/></g><path d="M2 7.5 L3.4 6.1 L4.8 7.5 L3.4 8.9Z" fill="#111"/><circle cx="6.9" cy="7.5" r="0.8" fill="#111"/></svg>
<span class="a" style="left:553px;top:32px;font-size:11.4px;color:#2a2a2a;white-space:nowrap;line-height:1;">Чертеж БЕЗ ИМЕНИ1</span>
<div class="a" style="left:696px;top:26px;width:168px;height:20px;background:#ababab;border-right:1px solid #7a7a7a"></div>
<svg class="a" style="left:702px;top:28px;width:16px;height:16px" viewBox="0 0 16 16"><g stroke="#111" stroke-width="1.25" fill="none"><rect x="0.9" y="2.6" width="14.6" height="12.8"/><rect x="8.6" y="12.3" width="6.9" height="3.1"/><rect x="9.6" y="4.3" width="2.9" height="6.3"/><path d="M4.6 5.7 H9.6 M4.6 9.3 H9.6"/></g><path d="M2 7.5 L3.4 6.1 L4.8 7.5 L3.4 8.9Z" fill="#111"/><circle cx="6.9" cy="7.5" r="0.8" fill="#111"/></svg>
<span class="a" style="left:722px;top:32px;font-size:11.4px;color:#2a2a2a;white-space:nowrap;line-height:1;">Чертеж.cdw</span>
<div class="a" style="left:0;top:52px;width:1920px;height:93px;background:#f0f0f0"></div>
<div class="a" style="left:0;top:127px;width:1920px;height:17px;background:#e4e4e4"></div>
<div class="a" style="left:0;top:144px;width:1920px;height:1px;background:#7c7c7c"></div>
<div class="a" style="left:0;top:52px;width:120px;height:24px;background:#505050"></div>
<svg class="a" style="left:5px;top:57px;width:16px;height:16px" viewBox="0 0 16 16"><g stroke="#fff" stroke-width="1.25" fill="none"><rect x="0.9" y="2.6" width="14.6" height="12.8"/><rect x="8.6" y="12.3" width="6.9" height="3.1"/><rect x="9.6" y="4.3" width="2.9" height="6.3"/><path d="M4.6 5.7 H9.6 M4.6 9.3 H9.6"/></g><path d="M2 7.5 L3.4 6.1 L4.8 7.5 L3.4 8.9Z" fill="#fff"/><circle cx="6.9" cy="7.5" r="0.8" fill="#fff"/></svg>
<span class="a" style="left:26px;top:58px;font-size:12.3px;color:#fff;white-space:nowrap;line-height:1;">Черчение</span>
<svg class="a" style="left:5px;top:81px;width:16px;height:16px" viewBox="0 0 16 16"><path d="M2.5 0.8 H10 L13.5 4.3 V15.5 H2.5 Z" stroke="#111" stroke-width="1.1" fill="none"/><path d="M10 0.8 V4.3 H13.5" stroke="#111" stroke-width="1" fill="none"/><g fill="#111"><rect x="4.5" y="5" width="2" height="1.6"/><rect x="7.5" y="5" width="2" height="1.6"/><rect x="4.5" y="7.8" width="2" height="1.6"/><rect x="7.5" y="7.8" width="2" height="1.6"/><rect x="10.3" y="7.8" width="1.6" height="1.6"/><rect x="4.5" y="10.6" width="2" height="1.6"/><rect x="7.5" y="10.6" width="2" height="1.6"/><rect x="10.3" y="10.6" width="1.6" height="1.6"/><rect x="4.5" y="13" width="2" height="1.2"/><rect x="7.5" y="13" width="2" height="1.2"/></g></svg>
<span class="a" style="left:26px;top:83px;font-size:12.3px;color:#383838;white-space:nowrap;line-height:1;">Управление</span>
<svg class="a" style="left:5px;top:106px;width:16px;height:16px" viewBox="0 0 16 16"><circle cx="5" cy="11" r="3.8" stroke="#111" stroke-width="1.1" fill="none"/><path d="M3 8 L11 1.5 L15 5 L8 12" stroke="#111" stroke-width="1.1" fill="none"/><path d="M10 4 L12 6" stroke="#111"/><path d="M6 8 L11 3 L13 5 L8 10Z" fill="#111"/></svg>
<span class="a" style="left:26px;top:103px;font-size:12.3px;color:#383838;white-space:nowrap;line-height:1;">Стандартные</span>
<span class="a" style="left:26px;top:114px;font-size:12.3px;color:#383838;white-space:nowrap;line-height:1;">изделия</span>
<svg class="a" style="left:56px;top:130px;width:9px;height:9px" viewBox="0 0 9 9"><path d="M1 1 L4.5 4 L8 1 M1 5 L4.5 8 L8 5" stroke="#222" stroke-width="1.1" fill="none"/></svg>
<div class="a" style="left:120px;top:52px;width:1px;height:92px;background:#c2c2c2"></div>
<div class="a" style="left:199px;top:52px;width:1px;height:92px;background:#c2c2c2"></div>
<div class="a" style="left:560px;top:52px;width:1px;height:92px;background:#c2c2c2"></div>
<div class="a" style="left:921px;top:52px;width:1px;height:92px;background:#c2c2c2"></div>
<div class="a" style="left:974px;top:52px;width:1px;height:92px;background:#c2c2c2"></div>
<div class="a" style="left:1079px;top:52px;width:1px;height:92px;background:#c2c2c2"></div>
<div class="a" style="left:1184px;top:52px;width:1px;height:92px;background:#c2c2c2"></div>
<div class="a" style="left:1237px;top:52px;width:1px;height:92px;background:#c2c2c2"></div>
<div class="a" style="left:1478px;top:52px;width:1px;height:92px;background:#c2c2c2"></div>
<div class="a" style="left:1531px;top:52px;width:1px;height:92px;background:#c2c2c2"></div>
<div class="a" style="left:1558px;top:52px;width:1px;height:92px;background:#c2c2c2"></div>
<div class="a" style="left:1611px;top:52px;width:1px;height:92px;background:#c2c2c2"></div>
<div class="a" style="left:1732px;top:52px;width:1px;height:92px;background:#c2c2c2"></div>
<svg class="a" style="left:126px;top:56px;width:16px;height:16px" viewBox="0 0 16 16"><path d="M3.5 1.5 H9.5 L12.5 4.5 V15 H3.5 Z M9.5 1.5 V4.5 H12.5" stroke="#111" stroke-width="1.1" fill="none"/></svg>
<svg class="a" style="left:152px;top:56px;width:16px;height:16px" viewBox="0 0 16 16"><path d="M0.8 3 H5.8 L7.2 4.4 H13.5 V6.5 H4 L1.5 12.5 H0.8 Z" fill="#111"/><path d="M3.8 7 H15.6 L13 13.5 H1 Z" fill="#2a2a2a"/></svg>
<svg class="a" style="left:178px;top:56px;width:16px;height:16px" viewBox="0 0 16 16"><g stroke="#c8c8c8" stroke-width="1.1" fill="none"><rect x="2" y="1.5" width="12.5" height="13"/><rect x="5" y="1.5" width="6" height="4" fill="#c8c8c8"/><rect x="4.5" y="9" width="8" height="5.5"/></g></svg>
<svg class="a" style="left:126px;top:81px;width:16px;height:16px" viewBox="0 0 16 16"><rect x="1.5" y="6" width="13" height="6" stroke="#111" stroke-width="1.1" fill="none"/><rect x="4" y="2" width="8" height="4" stroke="#111" stroke-width="1.1" fill="none"/><rect x="4" y="10" width="8" height="4.5" stroke="#111" stroke-width="1.1" fill="none"/></svg>
<svg class="a" style="left:152px;top:81px;width:16px;height:16px" viewBox="0 0 16 16"><path d="M6 1.5 H11 L14 4.5 V14.5 H7" stroke="#111" stroke-width="1.1" fill="none"/><circle cx="7" cy="8" r="4" stroke="#111" stroke-width="1.1" fill="none"/><path d="M4 11 L1 14.5" stroke="#111" stroke-width="1.5"/></svg>
<svg class="a" style="left:178px;top:81px;width:16px;height:16px" viewBox="0 0 16 16"><rect x="1.5" y="1.5" width="13" height="13" stroke="#111" stroke-width="1.1" fill="none"/><rect x="5" y="1.5" width="5" height="4" fill="#111"/><path d="M8 14 L14 8 L15 9 L9 15Z" fill="#111"/></svg>
<svg class="a" style="left:126px;top:106px;width:16px;height:16px" viewBox="0 0 16 16"><path d="M6 3 L2 7 L6 11 M2 7 H10 Q14 7 14 11 V14" stroke="#cfcfcf" stroke-width="1.2" fill="none"/></svg>
<svg class="a" style="left:152px;top:106px;width:16px;height:16px" viewBox="0 0 16 16"><path d="M10 3 L14 7 L10 11 M14 7 H6 Q2 7 2 11 V14" stroke="#cfcfcf" stroke-width="1.2" fill="none"/></svg>
<span class="a" style="left:55.5px;top:132px;width:200px;text-align:center;font-size:9.6px;color:#222;white-space:nowrap;line-height:1;letter-spacing:0.3px">Системная</span>
<svg class="a" style="left:192px;top:131px;width:4px;height:9px" viewBox="0 0 4 9"><g fill="#777"><rect x="0" y="0" width="1.2" height="1.2"/><rect x="2.8" y="0" width="1.2" height="1.2"/><rect x="0" y="3.8" width="1.2" height="1.2"/><rect x="2.8" y="3.8" width="1.2" height="1.2"/><rect x="0" y="7.6" width="1.2" height="1.2"/><rect x="2.8" y="7.6" width="1.2" height="1.2"/></g></svg>
<svg class="a" style="left:205px;top:56px;width:16px;height:16px" viewBox="0 0 16 16"><circle cx="3" cy="3" r="1.8" stroke="#111" stroke-width="1.1" fill="none"/><circle cx="13" cy="3" r="1.8" stroke="#111" stroke-width="1.1" fill="none"/><circle cx="3" cy="14" r="1.8" stroke="#111" stroke-width="1.1" fill="none"/><circle cx="13" cy="13" r="1.8" stroke="#111" stroke-width="1.1" fill="none"/><path d="M3 5 V12 M13 5 V11" stroke="#111" stroke-width="1.1" fill="none"/><path d="M9 1 L6 8 H9 L7 14 L11 6 H8 Z" fill="#111"/></svg>
<span class="a" style="left:226px;top:58px;font-size:12.2px;color:#383838;white-space:nowrap;line-height:1;">Автолиния</span>
<svg class="a" style="left:205px;top:81px;width:16px;height:16px" viewBox="0 0 16 16"><path d="M2.5 4.5 H13 V12 H2.5 Z" stroke="#111" stroke-width="1.1" fill="none"/><circle cx="2.5" cy="12.5" r="1.7" fill="#f0f0f0" stroke="#111"/><circle cx="13.5" cy="3" r="1.7" fill="#f0f0f0" stroke="#111"/><path d="M16 10 V16 H10 Z" fill="#111"/></svg>
<span class="a" style="left:226px;top:83px;font-size:12.2px;color:#383838;white-space:nowrap;line-height:1;">Прямоугольник</span>
<svg class="a" style="left:205px;top:106px;width:16px;height:16px" viewBox="0 0 16 16"><path d="M3.5 12.5 L12.5 3.5" stroke="#111" stroke-width="1.1" fill="none"/><circle cx="2.5" cy="13.5" r="1.7" stroke="#111" stroke-width="1.1" fill="none"/><circle cx="13.5" cy="2.5" r="1.7" stroke="#111" stroke-width="1.1" fill="none"/><path d="M16 10 V16 H10 Z" fill="#111"/></svg>
<span class="a" style="left:226px;top:108px;font-size:12.2px;color:#383838;white-space:nowrap;line-height:1;">Отрезок</span>
<svg class="a" style="left:326px;top:56px;width:16px;height:16px" viewBox="0 0 16 16"><circle cx="7.5" cy="8" r="6.5" stroke="#111" stroke-width="1.1" fill="none"/><circle cx="7.5" cy="8" r="1.3" stroke="#111" stroke-width="1.1" fill="none"/><circle cx="12" cy="12" r="1.5" fill="#f0f0f0" stroke="#111"/><path d="M16 10 V16 H10 Z" fill="#111"/></svg>
<span class="a" style="left:346px;top:58px;font-size:12.2px;color:#383838;white-space:nowrap;line-height:1;">Окружность</span>
<svg class="a" style="left:326px;top:81px;width:16px;height:16px" viewBox="0 0 16 16"><path d="M2 10 A6.5 6.5 0 0 1 12 3" stroke="#111" stroke-width="1.1" fill="none"/><circle cx="7.5" cy="8" r="1.3" stroke="#111" stroke-width="1.1" fill="none"/><circle cx="2" cy="11" r="1.5" stroke="#111" stroke-width="1.1" fill="none"/><circle cx="13" cy="4" r="1.5" stroke="#111" stroke-width="1.1" fill="none"/><path d="M16 10 V16 H10 Z" fill="#111"/></svg>
<span class="a" style="left:346px;top:83px;font-size:12.2px;color:#383838;white-space:nowrap;line-height:1;">Дуга</span>
<svg class="a" style="left:326px;top:106px;width:16px;height:16px" viewBox="0 0 16 16"><path d="M0.5 13 L15 4" stroke="#111" stroke-width="1.1" fill="none"/><circle cx="8" cy="8.5" r="1.3" stroke="#111" stroke-width="1.1" fill="none"/><path d="M16 10 V16 H10 Z" fill="#111"/></svg>
<span class="a" style="left:346px;top:103px;font-size:12.2px;color:#383838;white-space:nowrap;line-height:1;">Вспомогатель...</span>
<span class="a" style="left:346px;top:114px;font-size:12.2px;color:#383838;white-space:nowrap;line-height:1;">прямая</span>
<svg class="a" style="left:445px;top:56px;width:16px;height:16px" viewBox="0 0 16 16"><path d="M1 2 H9 L13 6 V14" stroke="#111" stroke-width="1.1" fill="none"/><path d="M9 2 H13 V6" stroke="#111" stroke-width="1" stroke-dasharray="1,1" fill="none"/><path d="M16 10 V16 H10 Z" fill="#111"/></svg>
<span class="a" style="left:466px;top:58px;font-size:12.2px;color:#383838;white-space:nowrap;line-height:1;">Фаска</span>
<svg class="a" style="left:445px;top:81px;width:16px;height:16px" viewBox="0 0 16 16"><path d="M1 2 H9 Q13 2 13 6 V14" stroke="#111" stroke-width="1.1" fill="none"/><path d="M9 2 H13 V6" stroke="#111" stroke-width="1" stroke-dasharray="1,1" fill="none"/><path d="M16 10 V16 H10 Z" fill="#111"/></svg>
<span class="a" style="left:466px;top:83px;font-size:12.2px;color:#383838;white-space:nowrap;line-height:1;">Скругление</span>
<svg class="a" style="left:445px;top:106px;width:16px;height:16px" viewBox="0 0 16 16"><path d="M1 1 H9 V7 H15 V15 H7 V9 H1 Z" stroke="#111" stroke-width="1.1" fill="none"/><path d="M2 2 L14 14 M4 2 L14 12 M2 4 L12 14 M6 2 L9 5 M2 6 L5 9" stroke="#111" stroke-width="0.8"/><path d="M16 10 V16 H10 Z" fill="#111"/></svg>
<span class="a" style="left:466px;top:108px;font-size:12.2px;color:#383838;white-space:nowrap;line-height:1;">Штриховка</span>
<span class="a" style="left:267px;top:132px;width:200px;text-align:center;font-size:9.6px;color:#222;white-space:nowrap;line-height:1;letter-spacing:0.3px">Геометрия</span>
<svg class="a" style="left:537px;top:134px;width:8px;height:5px" viewBox="0 0 8 5"><path d="M0 0 H8 L4 5Z" fill="#222"/></svg>
<svg class="a" style="left:552px;top:131px;width:4px;height:9px" viewBox="0 0 4 9"><g fill="#777"><rect x="0" y="0" width="1.2" height="1.2"/><rect x="2.8" y="0" width="1.2" height="1.2"/><rect x="0" y="3.8" width="1.2" height="1.2"/><rect x="2.8" y="3.8" width="1.2" height="1.2"/><rect x="0" y="7.6" width="1.2" height="1.2"/><rect x="2.8" y="7.6" width="1.2" height="1.2"/></g></svg>
<svg class="a" style="left:566px;top:56px;width:16px;height:16px" viewBox="0 0 16 16"><path d="M1 14 L14 1" stroke="#111" stroke-width="1.1" fill="none"/><path d="M2 7 H15" stroke="#111" stroke-width="1" stroke-dasharray="1.5,1"/><path d="M16 10 V16 H10 Z" fill="#111"/></svg>
<span class="a" style="left:587px;top:58px;font-size:12.2px;color:#383838;white-space:nowrap;line-height:1;">Усечь кривую</span>
<svg class="a" style="left:566px;top:81px;width:16px;height:16px" viewBox="0 0 16 16"><rect x="7" y="1.5" width="7" height="6" stroke="#111" stroke-width="1.1" fill="none"/><rect x="2.5" y="5.5" width="7" height="7" stroke="#111" stroke-width="1.1" fill="none"/><circle cx="2.5" cy="13" r="1.6" stroke="#111" stroke-width="1.1" fill="none"/><path d="M1 5 L5 1.5" stroke="#111" stroke-width="1.1" fill="none"/><path d="M16 10 V16 H10 Z" fill="#111"/></svg>
<span class="a" style="left:587px;top:78px;font-size:12.2px;color:#383838;white-space:nowrap;line-height:1;">Переместить по</span>
<span class="a" style="left:587px;top:89px;font-size:12.2px;color:#383838;white-space:nowrap;line-height:1;">координатам</span>
<svg class="a" style="left:566px;top:106px;width:16px;height:16px" viewBox="0 0 16 16"><rect x="7" y="3" width="6" height="4" stroke="#111" stroke-width="1.1" fill="none"/><rect x="1.5" y="10" width="5" height="4" stroke="#111" stroke-width="1.1" fill="none"/><path d="M6.5 12 H10 M4 10 V7 H7" stroke="#111" stroke-width="1.1" fill="none"/><path d="M16 10 V16 H10 Z" fill="#111"/></svg>
<span class="a" style="left:587px;top:103px;font-size:12.2px;color:#383838;white-space:nowrap;line-height:1;">Копия</span>
<span class="a" style="left:587px;top:114px;font-size:12.2px;color:#383838;white-space:nowrap;line-height:1;">указанием</span>
<svg class="a" style="left:686px;top:56px;width:16px;height:16px" viewBox="0 0 16 16"><path d="M1 1 L13 13 M1 4 H13 M1 12 H12 M14 1 V12" stroke="#111" stroke-width="1" stroke-dasharray="1.2,1" fill="none"/><path d="M1 1 L13 13 M14 1 V12" stroke="#111" stroke-width="1.1" fill="none"/><path d="M16 10 V16 H10 Z" fill="#111"/></svg>
<span class="a" style="left:707px;top:53px;font-size:12.2px;color:#383838;white-space:nowrap;line-height:1;">Удлинить до</span>
<span class="a" style="left:707px;top:64px;font-size:12.2px;color:#383838;white-space:nowrap;line-height:1;">ближайшего о...</span>
<svg class="a" style="left:686px;top:81px;width:16px;height:16px" viewBox="0 0 16 16"><rect x="2" y="8" width="11" height="6" stroke="#111" stroke-width="1.1" fill="none"/><rect x="8" y="2" width="5" height="12" stroke="#111" stroke-width="1.1" fill="none"/><circle cx="13" cy="14" r="1.6" fill="#f0f0f0" stroke="#111"/><path d="M4 6 L7 3 M5 3 H7 V5" stroke="#111" stroke-width="1.1" fill="none"/></svg>
<span class="a" style="left:707px;top:83px;font-size:12.2px;color:#383838;white-space:nowrap;line-height:1;">Повернуть</span>
<svg class="a" style="left:686px;top:106px;width:16px;height:16px" viewBox="0 0 16 16"><rect x="3" y="2" width="12" height="12" stroke="#111" stroke-width="1.1" fill="none"/><path d="M3 9 H8 V14" stroke="#111" stroke-width="1.1" fill="none"/><circle cx="2.5" cy="14" r="1.6" fill="#f0f0f0" stroke="#111"/><path d="M8 8 L12 4 M10 4 H12 V6" stroke="#111" stroke-width="1.1" fill="none"/></svg>
<span class="a" style="left:707px;top:108px;font-size:12.2px;color:#383838;white-space:nowrap;line-height:1;">Масштабиров...</span>
<svg class="a" style="left:806px;top:56px;width:16px;height:16px" viewBox="0 0 16 16"><path d="M1 15 L15 1" stroke="#111" stroke-width="1.1" fill="none"/><path d="M5 5 L8 8 M8 2 V6 M2 8 H6 M10 10 V14 M10 10 H14" stroke="#111" stroke-width="1"/><path d="M16 10 V16 H10 Z" fill="#111"/></svg>
<span class="a" style="left:827px;top:58px;font-size:12.2px;color:#383838;white-space:nowrap;line-height:1;">Разбить кривую</span>
<svg class="a" style="left:806px;top:81px;width:16px;height:16px" viewBox="0 0 16 16"><path d="M1 2 H15 L1 14 H15 L1 2" stroke="#111" stroke-width="1.1" fill="none"/><path d="M1 8 H15" stroke="#111" stroke-dasharray="1.5,1"/></svg>
<span class="a" style="left:827px;top:78px;font-size:12.2px;color:#383838;white-space:nowrap;line-height:1;">Зеркально</span>
<span class="a" style="left:827px;top:89px;font-size:12.2px;color:#383838;white-space:nowrap;line-height:1;">отразить</span>
<svg class="a" style="left:806px;top:106px;width:16px;height:16px" viewBox="0 0 16 16"><rect x="5" y="1.5" width="7" height="5" stroke="#111" stroke-width="1.1" fill="none"/><path d="M1 10 H13 V13 H1 Z M5 6 L2 9" stroke="#111" stroke-width="1.1" fill="none"/><path d="M16 10 V16 H10 Z" fill="#111"/></svg>
<span class="a" style="left:827px;top:103px;font-size:12.2px;color:#383838;white-space:nowrap;line-height:1;">Деформация</span>
<span class="a" style="left:827px;top:114px;font-size:12.2px;color:#383838;white-space:nowrap;line-height:1;">перемещением</span>
<span class="a" style="left:628px;top:132px;width:200px;text-align:center;font-size:9.6px;color:#222;white-space:nowrap;line-height:1;letter-spacing:0.3px">Правка</span>
<svg class="a" style="left:898px;top:134px;width:8px;height:5px" viewBox="0 0 8 5"><path d="M0 0 H8 L4 5Z" fill="#222"/></svg>
<svg class="a" style="left:913px;top:131px;width:4px;height:9px" viewBox="0 0 4 9"><g fill="#777"><rect x="0" y="0" width="1.2" height="1.2"/><rect x="2.8" y="0" width="1.2" height="1.2"/><rect x="0" y="3.8" width="1.2" height="1.2"/><rect x="2.8" y="3.8" width="1.2" height="1.2"/><rect x="0" y="7.6" width="1.2" height="1.2"/><rect x="2.8" y="7.6" width="1.2" height="1.2"/></g></svg>
<svg class="a" style="left:927px;top:56px;width:16px;height:16px" viewBox="0 0 16 16"><path d="M2 7 V15 M14 7 V15 M4 11 H12 M4 11 L6 9.5 M12 11 L10 9.5" stroke="#111" stroke-width="1.1" fill="none"/><path d="M9 0 L6 6 H9 L6 11 L11 5 H8 Z" fill="#111"/></svg>
<svg class="a" style="left:927px;top:81px;width:16px;height:16px" viewBox="0 0 16 16"><path d="M2 1 V14 M14 1 V14 M3 3 H13 M3 3 L5 1.5 M3 3 L5 4.5 M13 3 L11 1.5 M13 3 L11 4.5" stroke="#111" stroke-width="1.1" fill="none"/><path d="M16 10 V16 H10 Z" fill="#111"/></svg>
<svg class="a" style="left:927px;top:106px;width:16px;height:16px" viewBox="0 0 16 16"><path d="M2 1 V15 M3 3 H15 M3 3 L5 1.5 M3 3 L5 4.5" stroke="#111" stroke-width="1.1" fill="none"/></svg>
<svg class="a" style="left:953px;top:56px;width:16px;height:16px" viewBox="0 0 16 16"><circle cx="8" cy="8" r="6.5" stroke="#111" stroke-width="1.1" fill="none"/><path d="M5 11 L11 5" stroke="#111" stroke-width="1.1" fill="none"/></svg>
<svg class="a" style="left:953px;top:81px;width:16px;height:16px" viewBox="0 0 16 16"><path d="M2 2 A12 12 0 0 1 14 12" stroke="#111" stroke-width="1.1" fill="none"/><path d="M4 12 L10 6" stroke="#111" stroke-width="1.1" fill="none"/><path d="M16 10 V16 H10 Z" fill="#111"/></svg>
<svg class="a" style="left:953px;top:106px;width:16px;height:16px" viewBox="0 0 16 16"><path d="M3 1 L2 14 H14 M5 4 A10 10 0 0 1 14 12" stroke="#111" stroke-width="1.1" fill="none"/><path d="M16 10 V16 H10 Z" fill="#111"/></svg>
<span class="a" style="left:926px;top:132px;font-size:9.6px;color:#222;white-space:nowrap;line-height:1;letter-spacing:0.3px">Раз...</span>
<svg class="a" style="left:954px;top:134px;width:8px;height:5px" viewBox="0 0 8 5"><path d="M0 0 H8 L4 5Z" fill="#222"/></svg>
<svg class="a" style="left:967px;top:131px;width:4px;height:9px" viewBox="0 0 4 9"><g fill="#777"><rect x="0" y="0" width="1.2" height="1.2"/><rect x="2.8" y="0" width="1.2" height="1.2"/><rect x="0" y="3.8" width="1.2" height="1.2"/><rect x="2.8" y="3.8" width="1.2" height="1.2"/><rect x="0" y="7.6" width="1.2" height="1.2"/><rect x="2.8" y="7.6" width="1.2" height="1.2"/></g></svg>
<svg class="a" style="left:980px;top:56px;width:16px;height:16px" viewBox="0 0 16 16"><path d="M1 14 L4 4 L7 1 M7 1 H13 L15 14 M1 14 L3 11 M15 14 L13 11" stroke="#111" stroke-width="1.1" fill="none"/></svg>
<svg class="a" style="left:980px;top:81px;width:16px;height:16px" viewBox="0 0 16 16"><path d="M2 9 L5 2 L8 9 M3 7 H7 M1 13 H14" stroke="#111" stroke-width="1.1" fill="none"/><circle cx="14" cy="13" r="1.2" fill="#111"/></svg>
<svg class="a" style="left:980px;top:106px;width:16px;height:16px" viewBox="0 0 16 16"><path d="M1.5 1.5 H14.5 V5 H13 L12.5 3.5 H9.5 V13.5 L11 14 V15 H5 V14 L6.5 13.5 V3.5 H3.5 L3 5 H1.5 Z" fill="#333"/></svg>
<svg class="a" style="left:1006px;top:56px;width:16px;height:16px" viewBox="0 0 16 16"><path d="M1 15 L7 2 H13 M8 6 H13 M8 10 H13" stroke="#111" stroke-width="1.1" fill="none"/><path d="M1 15 L2 11 L4 12 Z" fill="#111"/></svg>
<svg class="a" style="left:1006px;top:81px;width:16px;height:16px" viewBox="0 0 16 16"><path d="M2 9 L5 2 L8 9 M3 7 H7 M12 2 V12" stroke="#111" stroke-width="1.1" fill="none"/><path d="M1 13 H11" stroke="#111" stroke-width="2"/><path d="M16 10 V16 H10 Z" fill="#111"/></svg>
<svg class="a" style="left:1006px;top:106px;width:16px;height:16px" viewBox="0 0 16 16"><rect x="1.5" y="1.5" width="13" height="13" stroke="#111" stroke-width="1.1" fill="none"/><path d="M1.5 4 H14.5 M3 7 H13 M3 9.5 H13 M3 12 H13" stroke="#111" stroke-width="1" stroke-dasharray="2,1"/></svg>
<svg class="a" style="left:1032px;top:56px;width:16px;height:16px" viewBox="0 0 16 16"><path d="M1 14 H15 M4 8 H12 L8 13 Z M9 1 L15 1 L8 13" stroke="#111" stroke-width="1.1" fill="none"/></svg>
<svg class="a" style="left:1032px;top:81px;width:16px;height:16px" viewBox="0 0 16 16"><circle cx="6" cy="10" r="5" stroke="#111" stroke-width="1.1" fill="none"/><path d="M5 7 H8 V14 H5 Z M1 10 H11 M8 5 L12 1 H15" stroke="#111" stroke-width="1.1" fill="none"/></svg>
<svg class="a" style="left:1032px;top:106px;width:16px;height:16px" viewBox="0 0 16 16"><path d="M9 0 L5 7 H8 L5 13 L11 5 H8 Z" fill="#111"/><path d="M1 15 H15" stroke="#111" stroke-dasharray="2,1"/></svg>
<svg class="a" style="left:1057px;top:56px;width:16px;height:16px" viewBox="0 0 16 16"><rect x="3" y="1" width="10" height="8" stroke="#111" stroke-width="1.1" fill="none"/><path d="M8 9 V12 M1 14 H15" stroke="#111" stroke-width="1.1" fill="none"/><path d="M5 14 L8 11 L11 14 Z" fill="#111"/><path d="M6 6 H10 M8 3 V6" stroke="#111"/></svg>
<svg class="a" style="left:1057px;top:81px;width:16px;height:16px" viewBox="0 0 16 16"><path d="M2 1 H15 V8 H2 Z M6 1 V8 M10 1 V8 M2 1 V15 M2 14 H15" stroke="#111" stroke-width="1.1" fill="none"/><path d="M1 15 L3 12 L5 15 Z" fill="#111"/></svg>
<svg class="a" style="left:1057px;top:106px;width:16px;height:16px" viewBox="0 0 16 16"><path d="M8 1 L15 8 L8 15 L1 8 Z M8 3 V13 M3 8 H13" stroke="#111" stroke-width="1.1" fill="none"/><circle cx="8" cy="8" r="4.5" stroke="#111" stroke-width="1.1" fill="none"/><path d="M16 10 V16 H10 Z" fill="#111"/></svg>
<span class="a" style="left:916px;top:132px;width:200px;text-align:center;font-size:9.6px;color:#222;white-space:nowrap;line-height:1;letter-spacing:0.3px">Обозначения</span>
<svg class="a" style="left:1056px;top:134px;width:8px;height:5px" viewBox="0 0 8 5"><path d="M0 0 H8 L4 5Z" fill="#222"/></svg>
<svg class="a" style="left:1071px;top:131px;width:4px;height:9px" viewBox="0 0 4 9"><g fill="#777"><rect x="0" y="0" width="1.2" height="1.2"/><rect x="2.8" y="0" width="1.2" height="1.2"/><rect x="0" y="3.8" width="1.2" height="1.2"/><rect x="2.8" y="3.8" width="1.2" height="1.2"/><rect x="0" y="7.6" width="1.2" height="1.2"/><rect x="2.8" y="7.6" width="1.2" height="1.2"/></g></svg>
<svg class="a" style="left:1085px;top:56px;width:16px;height:16px" viewBox="0 0 16 16"><path d="M1 14 H15 M3 1 V15 M4 4 H8 M5 3 L4 4 L5 5 M12 8 V12" stroke="#111" stroke-width="1.1" fill="none"/><circle cx="12" cy="4" r="2" stroke="#111" stroke-width="1.1" fill="none"/><path d="M10 10 L12 13 L14 10 Z" fill="#111"/></svg>
<svg class="a" style="left:1085px;top:81px;width:16px;height:16px" viewBox="0 0 16 16"><path d="M1 15 L15 1" stroke="#111" stroke-width="1.1" stroke-dasharray="5,3"/></svg>
<svg class="a" style="left:1085px;top:106px;width:16px;height:16px" viewBox="0 0 16 16"><path d="M1 1 L4 13 M14 1 L11 13" stroke="#111" stroke-width="1.1" fill="none"/><circle cx="4" cy="14" r="1.5" stroke="#111" stroke-width="1.1" fill="none"/><circle cx="11" cy="14" r="1.5" stroke="#111" stroke-width="1.1" fill="none"/><path d="M16 10 V16 H10 Z" fill="#111"/></svg>
<svg class="a" style="left:1111px;top:56px;width:16px;height:16px" viewBox="0 0 16 16"><path d="M1 10 L11 1 M5 15 L15 5" stroke="#111" stroke-width="1.1" fill="none"/></svg>
<svg class="a" style="left:1111px;top:81px;width:16px;height:16px" viewBox="0 0 16 16"><path d="M1 13 L13 2 M1 13 L14 8 M2 15 H15" stroke="#111" stroke-width="1.1" fill="none"/></svg>
<svg class="a" style="left:1111px;top:106px;width:16px;height:16px" viewBox="0 0 16 16"><path d="M1 5 H15 M1 10 H15" stroke="#111" stroke-width="2.2"/></svg>
<svg class="a" style="left:1137px;top:56px;width:16px;height:16px" viewBox="0 0 16 16"><path d="M8 1 V15 M1 15 H15 M8 10 H12 V15" stroke="#111" stroke-width="1.1" fill="none"/></svg>
<svg class="a" style="left:1137px;top:81px;width:16px;height:16px" viewBox="0 0 16 16"><path d="M3 10 L8 4 L13 10 Z" fill="#111"/><circle cx="8" cy="3" r="2" fill="#f0f0f0" stroke="#111"/><path d="M2 13 L4 11 M5 13 L7 11 M8 13 L10 11 M11 13 L13 11 M2 11 H14" stroke="#111" stroke-width="1"/><path d="M16 10 V16 H10 Z" fill="#111"/></svg>
<svg class="a" style="left:1137px;top:106px;width:16px;height:16px" viewBox="0 0 16 16"><path d="M1 1 V15 H15 Z M1 15 L6 9" stroke="#111" stroke-width="1.1" fill="none"/></svg>
<svg class="a" style="left:1163px;top:56px;width:16px;height:16px" viewBox="0 0 16 16"><circle cx="7" cy="6" r="5" stroke="#111" stroke-width="1.1" fill="none"/><path d="M6 15 L15 6" stroke="#111" stroke-width="1.1" fill="none"/></svg>
<svg class="a" style="left:1163px;top:81px;width:16px;height:16px" viewBox="0 0 16 16"><circle cx="8" cy="8" r="6.5" stroke="#111" stroke-width="1.1" fill="none"/><circle cx="8" cy="8" r="3.5" stroke="#111" stroke-width="1.1" fill="none"/></svg>
<svg class="a" style="left:1163px;top:106px;width:16px;height:16px" viewBox="0 0 16 16"><circle cx="8" cy="8" r="7" stroke="#111" stroke-width="1.1" fill="none"/><path d="M4 12 L12 4 M2 9 L9 2 M7 14 L14 7" stroke="#111" stroke-width="1"/><path d="M16 10 V16 H10 Z" fill="#111"/></svg>
<span class="a" style="left:1020px;top:132px;width:200px;text-align:center;font-size:9.6px;color:#222;white-space:nowrap;line-height:1;letter-spacing:0.3px">Ограничения</span>
<svg class="a" style="left:1161px;top:134px;width:8px;height:5px" viewBox="0 0 8 5"><path d="M0 0 H8 L4 5Z" fill="#222"/></svg>
<svg class="a" style="left:1176px;top:131px;width:4px;height:9px" viewBox="0 0 4 9"><g fill="#777"><rect x="0" y="0" width="1.2" height="1.2"/><rect x="2.8" y="0" width="1.2" height="1.2"/><rect x="0" y="3.8" width="1.2" height="1.2"/><rect x="2.8" y="3.8" width="1.2" height="1.2"/><rect x="0" y="7.6" width="1.2" height="1.2"/><rect x="2.8" y="7.6" width="1.2" height="1.2"/></g></svg>
<svg class="a" style="left:1190px;top:56px;width:16px;height:16px" viewBox="0 0 16 16"><circle cx="2.5" cy="13.5" r="1.7" stroke="#111" stroke-width="1.1" fill="none"/><circle cx="13.5" cy="2.5" r="1.7" stroke="#111" stroke-width="1.1" fill="none"/><path d="M4 12 L12 4" stroke="#111" stroke-dasharray="1.5,1.5"/><path d="M7 3 Q9 1 10 3 Q10 5 8 6 V7" stroke="#111" fill="none"/></svg>
<svg class="a" style="left:1190px;top:81px;width:16px;height:16px" viewBox="0 0 16 16"><path d="M1 5 L5 7 L3 12 M15 5 L11 7 L13 12 M3 12 L13 12 M1 15 L4 12 M15 15 L12 12" stroke="#111" stroke-width="1.1" fill="none"/><circle cx="4" cy="12" r="1.5" stroke="#111" stroke-width="1.1" fill="none"/><circle cx="12" cy="12" r="1.5" stroke="#111" stroke-width="1.1" fill="none"/><path d="M7 2 Q9 0 10 2 Q10 4 8 5 V7" stroke="#111" fill="none"/></svg>
<svg class="a" style="left:1190px;top:106px;width:16px;height:16px" viewBox="0 0 16 16"><path d="M1 1 H7 V9 H15 V15 H1 Z" stroke="#111" stroke-width="1.1" fill="none"/><path d="M2 6 L6 2 M2 11 L6 7 M3 14 L8 9 M8 14 L12 10" stroke="#111" stroke-width="0.9"/><path d="M10 2 Q12 0 14 2 Q14 5 12 6 V8" stroke="#111" fill="none"/></svg>
<svg class="a" style="left:1215px;top:56px;width:16px;height:16px" viewBox="0 0 16 16"><circle cx="2" cy="2" r="1.5" stroke="#111" stroke-width="1.1" fill="none"/><circle cx="2" cy="14" r="1.5" stroke="#111" stroke-width="1.1" fill="none"/><circle cx="14" cy="14" r="1.5" stroke="#111" stroke-width="1.1" fill="none"/><path d="M2 4 V12 M4 4 L10 12" stroke="#111" stroke-dasharray="1,1"/><path d="M11 2 Q13 0 15 2 Q15 5 13 6 V8" stroke="#111" fill="none"/></svg>
<svg class="a" style="left:1215px;top:81px;width:16px;height:16px" viewBox="0 0 16 16"><path d="M1 1 H7 V9 H15 V15 H1 Z" stroke="#111" stroke-width="1.1" fill="none"/><path d="M10 2 Q12 0 14 2 Q14 5 12 6 V8" stroke="#111" fill="none"/></svg>
<svg class="a" style="left:1215px;top:106px;width:16px;height:16px" viewBox="0 0 16 16"><path d="M2 1 V15 H15 M1 3 L2 1 L3 3 M13 14 L15 15 L13 16" stroke="#111" stroke-width="1.1" fill="none"/><circle cx="6" cy="9" r="1.3" stroke="#111" stroke-width="1.1" fill="none"/><path d="M10 2 Q12 0 14 2 Q14 5 12 6 V8" stroke="#111" fill="none"/></svg>
<span class="a" style="left:1189px;top:132px;font-size:9.6px;color:#222;white-space:nowrap;line-height:1;letter-spacing:0.3px">Ди...</span>
<svg class="a" style="left:1214px;top:134px;width:8px;height:5px" viewBox="0 0 8 5"><path d="M0 0 H8 L4 5Z" fill="#222"/></svg>
<svg class="a" style="left:1230px;top:131px;width:4px;height:9px" viewBox="0 0 4 9"><g fill="#777"><rect x="0" y="0" width="1.2" height="1.2"/><rect x="2.8" y="0" width="1.2" height="1.2"/><rect x="0" y="3.8" width="1.2" height="1.2"/><rect x="2.8" y="3.8" width="1.2" height="1.2"/><rect x="0" y="7.6" width="1.2" height="1.2"/><rect x="2.8" y="7.6" width="1.2" height="1.2"/></g></svg>
<svg class="a" style="left:1243px;top:56px;width:16px;height:16px" viewBox="0 0 16 16"><rect x="1.5" y="1.5" width="13" height="13" stroke="#111" stroke-width="1.1" fill="none"/><path d="M5 3 V11 H12 M3.5 5 L5 3 L6.5 5 M10 9.5 L12 11 L10 12.5 M3 8 H8" stroke="#111" stroke-width="1.1" fill="none"/></svg>
<span class="a" style="left:1264px;top:58px;font-size:12.2px;color:#383838;white-space:nowrap;line-height:1;">Новый вид</span>
<svg class="a" style="left:1243px;top:81px;width:16px;height:16px" viewBox="0 0 16 16"><rect x="1.5" y="5" width="13" height="10" stroke="#111" stroke-width="1.1" fill="none"/><rect x="1.5" y="1" width="5" height="3" stroke="#111" stroke-width="1.1" fill="none"/><rect x="3" y="7" width="6" height="3" stroke="#111" stroke-width="1.1" fill="none"/><rect x="9" y="12" width="5.5" height="3" stroke="#111" stroke-width="1.1" fill="none"/><path d="M8 2 H12 L14 4" stroke="#111" stroke-width="1.1" fill="none"/></svg>
<span class="a" style="left:1264px;top:83px;font-size:12.2px;color:#383838;white-space:nowrap;line-height:1;">Вид с модели...</span>
<svg class="a" style="left:1243px;top:106px;width:16px;height:16px" viewBox="0 0 16 16"><path d="M8 1 V5 M6 3 H10" stroke="#111" stroke-width="1.1" fill="none"/><rect x="1.5" y="6" width="13" height="4" stroke="#111" stroke-width="1.1" fill="none"/><rect x="1.5" y="10" width="13" height="4.5" stroke="#111" stroke-width="1.1" fill="none"/></svg>
<span class="a" style="left:1264px;top:108px;font-size:12.2px;color:#383838;white-space:nowrap;line-height:1;">Вид по стрелке</span>
<svg class="a" style="left:1363px;top:56px;width:16px;height:16px" viewBox="0 0 16 16"><rect x="1.5" y="5" width="13" height="10" stroke="#111" stroke-width="1.1" fill="none"/><rect x="1.5" y="1" width="5" height="3" stroke="#111" stroke-width="1.1" fill="none"/><rect x="3" y="7" width="4" height="2.5" stroke="#111" stroke-width="1.1" fill="none"/><rect x="8" y="7" width="4" height="2.5" stroke="#111" stroke-width="1.1" fill="none"/><path d="M1.5 11 H14.5 M8 2 H12 L14 4" stroke="#111" stroke-width="1.1" fill="none"/></svg>
<span class="a" style="left:1384px;top:53px;font-size:12.2px;color:#383838;white-space:nowrap;line-height:1;">Стандартные</span>
<span class="a" style="left:1384px;top:64px;font-size:12.2px;color:#383838;white-space:nowrap;line-height:1;">виды с модели...</span>
<svg class="a" style="left:1363px;top:81px;width:16px;height:16px" viewBox="0 0 16 16"><rect x="1.5" y="2" width="13" height="7" stroke="#111" stroke-width="1.1" fill="none"/><rect x="4" y="4" width="8" height="3" stroke="#111" stroke-width="1.1" fill="none"/><rect x="1.5" y="11" width="13" height="4" stroke="#111" stroke-width="1.1" fill="none"/></svg>
<span class="a" style="left:1384px;top:78px;font-size:12.2px;color:#383838;white-space:nowrap;line-height:1;">Проекционный</span>
<span class="a" style="left:1384px;top:89px;font-size:12.2px;color:#383838;white-space:nowrap;line-height:1;">вид</span>
<svg class="a" style="left:1363px;top:106px;width:16px;height:16px" viewBox="0 0 16 16"><path d="M1 3 H5 M3 1.5 L5 3 L3 4.5 M6 1 V5 M1 13 H5 M3 11.5 L5 13 L3 14.5 M6 11 V15" stroke="#111" stroke-width="1.1" fill="none"/><rect x="9" y="4" width="5" height="9" stroke="#111" stroke-width="1.1" fill="none"/></svg>
<span class="a" style="left:1384px;top:108px;font-size:12.2px;color:#383838;white-space:nowrap;line-height:1;">Разрез/сечение</span>
<span class="a" style="left:1246px;top:132px;width:200px;text-align:center;font-size:9.6px;color:#222;white-space:nowrap;line-height:1;letter-spacing:0.3px">Виды</span>
<svg class="a" style="left:1455px;top:134px;width:8px;height:5px" viewBox="0 0 8 5"><path d="M0 0 H8 L4 5Z" fill="#222"/></svg>
<svg class="a" style="left:1470px;top:131px;width:4px;height:9px" viewBox="0 0 4 9"><g fill="#777"><rect x="0" y="0" width="1.2" height="1.2"/><rect x="2.8" y="0" width="1.2" height="1.2"/><rect x="0" y="3.8" width="1.2" height="1.2"/><rect x="2.8" y="3.8" width="1.2" height="1.2"/><rect x="0" y="7.6" width="1.2" height="1.2"/><rect x="2.8" y="7.6" width="1.2" height="1.2"/></g></svg>
<svg class="a" style="left:1484px;top:56px;width:16px;height:16px" viewBox="0 0 16 16"><path d="M2 8 L5 2 L8 8 Z" stroke="#111" stroke-width="1.1" fill="none"/><rect x="7" y="1" width="7" height="7" stroke="#111" stroke-width="1.1" fill="none"/><circle cx="7" cy="11" r="4" stroke="#111" stroke-width="1.1" fill="none"/></svg>
<svg class="a" style="left:1484px;top:81px;width:16px;height:16px" viewBox="0 0 16 16"><rect x="1.5" y="1.5" width="13" height="13" stroke="#111" stroke-width="1.1" fill="none"/><path d="M1.5 14.5 L5 9 L8 11 L11 6 L14.5 14.5 Z" fill="#111"/><circle cx="12" cy="4" r="1.5" fill="#111"/></svg>
<svg class="a" style="left:1484px;top:106px;width:16px;height:16px" viewBox="0 0 16 16"><rect x="1.5" y="2" width="13" height="12.5" stroke="#111" stroke-width="1.1" fill="none"/><path d="M4 9 V13 H7 M9 9 H13 M10 8 L9 9 L10 10 M11 2 V5 H14" stroke="#111" stroke-width="1.1" fill="none"/></svg>
<svg class="a" style="left:1510px;top:56px;width:16px;height:16px" viewBox="0 0 16 16"><path d="M3 2 H11 L15 6 V14 H3 Z" stroke="#111" stroke-width="1.1" fill="none"/><circle cx="8" cy="8" r="3.5" stroke="#111" stroke-width="1.1" fill="none"/><circle cx="2" cy="14" r="1.4" stroke="#111" stroke-width="1.1" fill="none"/></svg>
<svg class="a" style="left:1510px;top:81px;width:16px;height:16px" viewBox="0 0 16 16"><path d="M2 3 V14 H13 V9" stroke="#111" stroke-width="1.1" fill="none"/><path d="M6 1 H14 V9 H6 Z M6 1 L14 9" stroke="#111" stroke-dasharray="1.2,1" fill="none"/></svg>
<svg class="a" style="left:1510px;top:106px;width:16px;height:16px" viewBox="0 0 16 16"><rect x="6" y="1.5" width="9" height="6.5" stroke="#111" stroke-width="1.1" fill="none"/><path d="M6 8 L2 13 M1 14 L4 11 L3 15 Z" stroke="#111" stroke-width="1.1" fill="none"/></svg>
<span class="a" style="left:1482px;top:132px;font-size:9.6px;color:#222;white-space:nowrap;line-height:1;letter-spacing:0.3px">Вст...</span>
<svg class="a" style="left:1508px;top:134px;width:8px;height:5px" viewBox="0 0 8 5"><path d="M0 0 H8 L4 5Z" fill="#222"/></svg>
<svg class="a" style="left:1523px;top:131px;width:4px;height:9px" viewBox="0 0 4 9"><g fill="#777"><rect x="0" y="0" width="1.2" height="1.2"/><rect x="2.8" y="0" width="1.2" height="1.2"/><rect x="0" y="3.8" width="1.2" height="1.2"/><rect x="2.8" y="3.8" width="1.2" height="1.2"/><rect x="0" y="7.6" width="1.2" height="1.2"/><rect x="2.8" y="7.6" width="1.2" height="1.2"/></g></svg>
<svg class="a" style="left:1537px;top:56px;width:16px;height:16px" viewBox="0 0 16 16"><rect x="1.5" y="2.5" width="11" height="12" stroke="#111" stroke-width="1.1" fill="none"/><rect x="5" y="1" width="4" height="2.5" fill="#111"/><circle cx="9" cy="9" r="3.5" stroke="#111" stroke-width="1.1" fill="none"/><path d="M11.5 11.5 L15 15" stroke="#111" stroke-width="1.5"/><path d="M3 6 H6 M3 9 H5 M3 12 H5" stroke="#111"/></svg>
<svg class="a" style="left:1537px;top:81px;width:16px;height:16px" viewBox="0 0 16 16"><g stroke="#cfcfcf" stroke-width="1.1" fill="none"><rect x="1.5" y="1.5" width="13" height="12"/><path d="M1.5 4 H14.5"/><circle cx="8" cy="9" r="3.5"/><path d="M10.5 11.5 L13 14"/></g></svg>
<span class="a" style="left:1536px;top:132px;font-size:9.6px;color:#222;white-space:nowrap;line-height:1;letter-spacing:0.3px">Р..</span>
<svg class="a" style="left:1550px;top:131px;width:4px;height:9px" viewBox="0 0 4 9"><g fill="#777"><rect x="0" y="0" width="1.2" height="1.2"/><rect x="2.8" y="0" width="1.2" height="1.2"/><rect x="0" y="3.8" width="1.2" height="1.2"/><rect x="2.8" y="3.8" width="1.2" height="1.2"/><rect x="0" y="7.6" width="1.2" height="1.2"/><rect x="2.8" y="7.6" width="1.2" height="1.2"/></g></svg>
<svg class="a" style="left:1563px;top:56px;width:16px;height:16px" viewBox="0 0 16 16"><path d="M1.5 14.5 V6 H7 V1.5 H14.5 V14.5 Z" stroke="#111" stroke-width="1.1" fill="none"/><path d="M3.5 12.5 V8 H9 V3.5 H12.5 V12.5 Z" stroke="#111" stroke-width="1.1" fill="none"/></svg>
<svg class="a" style="left:1563px;top:81px;width:16px;height:16px" viewBox="0 0 16 16"><rect x="1" y="6" width="10" height="9" fill="#111"/><circle cx="10" cy="6" r="5" fill="#111"/></svg>
<svg class="a" style="left:1563px;top:106px;width:16px;height:16px" viewBox="0 0 16 16"><path d="M5 6 L9 1 L14 4 L11 9 Z" fill="#111"/><rect x="2" y="10" width="12" height="5" stroke="#111" stroke-dasharray="1.5,1" fill="none"/><path d="M4 12.5 H12" stroke="#111"/></svg>
<svg class="a" style="left:1589px;top:56px;width:16px;height:16px" viewBox="0 0 16 16"><path d="M1 7 H9 M14 1 V15" stroke="#111" stroke-width="1.1" fill="none"/><path d="M10 7 H14" stroke="#111" stroke-dasharray="1,1"/></svg>
<svg class="a" style="left:1589px;top:81px;width:16px;height:16px" viewBox="0 0 16 16"><path d="M1.5 8 L5 5 V1.5 H10 A5 5 0 0 1 14 9 L11 14.5 H1.5 Z" stroke="#111" stroke-width="1.1" fill="none"/></svg>
<span class="a" style="left:1563px;top:132px;font-size:9.6px;color:#222;white-space:nowrap;line-height:1;letter-spacing:0.3px">Инстр...</span>
<svg class="a" style="left:1603px;top:131px;width:4px;height:9px" viewBox="0 0 4 9"><g fill="#777"><rect x="0" y="0" width="1.2" height="1.2"/><rect x="2.8" y="0" width="1.2" height="1.2"/><rect x="0" y="3.8" width="1.2" height="1.2"/><rect x="2.8" y="3.8" width="1.2" height="1.2"/><rect x="0" y="7.6" width="1.2" height="1.2"/><rect x="2.8" y="7.6" width="1.2" height="1.2"/></g></svg>
<svg class="a" style="left:1616px;top:56px;width:16px;height:16px" viewBox="0 0 16 16"><path d="M1 1 H15 V6 L11 10 V12 L8 15 L5 12 V10 L1 6 Z" stroke="#111" stroke-width="1.1" fill="none"/><path d="M1 3 L3 1 M1 6 L6 1 M1 9 L3 7 M12 1 L15 4 M10 1 L15 6 M4 1 L4 10" stroke="#111" stroke-width="0.9"/><rect x="5" y="1" width="6" height="11" fill="#f0f0f0" stroke="#111"/><path d="M16 10 V16 H10 Z" fill="#111"/></svg>
<span class="a" style="left:1638px;top:53px;font-size:12.2px;color:#383838;white-space:nowrap;line-height:1;">Отверстие</span>
<span class="a" style="left:1638px;top:64px;font-size:12.2px;color:#383838;white-space:nowrap;line-height:1;">простое</span>
<svg class="a" style="left:1616px;top:81px;width:16px;height:16px" viewBox="0 0 16 16"><circle cx="8" cy="8" r="6.5" stroke="#111" stroke-width="1.1" fill="none"/><circle cx="8" cy="8" r="4" stroke="#111" stroke-width="1.1" fill="none"/><path d="M8 6 V10 M6 8 H10" stroke="#111"/></svg>
<span class="a" style="left:1638px;top:78px;font-size:12.2px;color:#383838;white-space:nowrap;line-height:1;">Наружная</span>
<span class="a" style="left:1638px;top:89px;font-size:12.2px;color:#383838;white-space:nowrap;line-height:1;">резьба</span>
<svg class="a" style="left:1616px;top:106px;width:16px;height:16px" viewBox="0 0 16 16"><path d="M1 8 H11 L8 11 V13 L6 15 L4 13 V11 Z" stroke="#111" stroke-width="1.1" fill="none"/><path d="M8 4 A4 4 0 0 1 15 4 M13 2 L15 4 L13 6" stroke="#111" stroke-width="1.1" fill="none"/></svg>
<span class="a" style="left:1638px;top:103px;font-size:12.2px;color:#383838;white-space:nowrap;line-height:1;">Перестроить</span>
<span class="a" style="left:1638px;top:114px;font-size:12.2px;color:#383838;white-space:nowrap;line-height:1;">отверстия и из...</span>
<span class="a" style="left:1567px;top:132px;width:200px;text-align:center;font-size:9.6px;color:#222;white-space:nowrap;line-height:1;letter-spacing:0.3px">Отверстия и резьбы</span>
<svg class="a" style="left:1724px;top:131px;width:4px;height:9px" viewBox="0 0 4 9"><g fill="#777"><rect x="0" y="0" width="1.2" height="1.2"/><rect x="2.8" y="0" width="1.2" height="1.2"/><rect x="0" y="3.8" width="1.2" height="1.2"/><rect x="2.8" y="3.8" width="1.2" height="1.2"/><rect x="0" y="7.6" width="1.2" height="1.2"/><rect x="2.8" y="7.6" width="1.2" height="1.2"/></g></svg>
<div class="a" style="left:0px;top:145px;width:26px;height:895px;background:#cacaca;"></div>
<div class="a" style="left:0px;top:145px;width:26px;height:125px;background:#f0f0f0;"></div>
<div class="a" style="left:0px;top:145px;width:26px;height:25px;background:#4f4f4f;"></div>
<svg class="a" style="left:7px;top:149px;width:12px;height:18px" viewBox="0 0 12 18"><g stroke="#fff" stroke-width="1.1" fill="none"><circle cx="2" cy="2" r="1.5"/><path d="M2 3.5 V15.5 H8 M2 10 H8 M2 5.5 H8"/><circle cx="9.5" cy="5.5" r="1.5"/><circle cx="9.5" cy="10" r="1.5"/><circle cx="9.5" cy="15.5" r="1.5"/></g></svg>
<svg class="a" style="left:7px;top:174px;width:12px;height:16px" viewBox="0 0 12 16"><g stroke="#111" stroke-width="1.1" fill="none"><rect x="0.5" y="0.5" width="11" height="15"/><rect x="2.5" y="2.5" width="2.5" height="2.5"/><path d="M6 4 H10 M2.5 8 L3.5 9 L5 7 M6 8.5 H10 M2.5 11.5 L3.5 12.5 L5 10.5 M6 12 H10"/></g></svg>
<span class="a" style="left:7px;top:197px;font-family:'Liberation Serif',serif;font-style:italic;font-size:17px;color:#111;line-height:1">f<span style="font-size:12px;position:relative;top:4px">x</span></span>
<svg class="a" style="left:5px;top:224px;width:16px;height:16px" viewBox="0 0 16 16"><g fill="#111"><rect x="1" y="1" width="14" height="3"/><rect x="1" y="6" width="14" height="3"/><rect x="1" y="11" width="14" height="3.5"/></g></svg>
<svg class="a" style="left:3px;top:247px;width:22px;height:20px" viewBox="0 0 22 20"><g stroke="#111" stroke-width="1.2" fill="none"><path d="M3 3.5 L5 2 V9.5"/><path d="M16 9.5 V5.5 H10.5 M12.5 3.5 L10.5 5.5 L12.5 7.5"/><path d="M6.5 11 V15 H11.5 M9.5 13 L11.5 15 L9.5 17"/><path d="M14 13 Q14 11.2 16 11.2 Q18 11.2 18 13 Q18 14.3 16.5 15.5 L14 18 H18.5"/></g></svg>
<div class="a" style="left:26px;top:145px;width:301px;height:895px;background:#f2f2f2;border-left:1px solid #6e6e6e;border-right:1px solid #6e6e6e"></div>
<div class="a" style="left:27px;top:145px;width:299px;height:16px;background:#c8c8c8;"></div>
<span class="a" style="left:30px;top:148px;font-size:11.6px;color:#2a2a2a;white-space:nowrap;line-height:1;">Дерево чертежа</span>
<svg class="a" style="left:311px;top:146px;width:14px;height:14px" viewBox="0 0 14 14"><g fill="none" stroke="#222" stroke-width="1.6"><circle cx="7" cy="7" r="3.5"/><path d="M7 0.5 V3 M7 11 V13.5 M0.5 7 H3 M11 7 H13.5 M2.4 2.4 L4.2 4.2 M9.8 9.8 L11.6 11.6 M2.4 11.6 L4.2 9.8 M9.8 4.2 L11.6 2.4"/></g></svg>
<div class="a" style="left:27px;top:161px;width:299px;height:26px;background:#f0f0f0;"></div>
<svg class="a" style="left:33px;top:169px;width:15px;height:11px" viewBox="0 0 15 11"><g stroke="#111" stroke-width="1.1" fill="none"><rect x="0.5" y="0.5" width="14" height="10"/><rect x="8" y="6" width="6.5" height="4.5"/></g></svg>
<svg class="a" style="left:58px;top:167px;width:16px;height:16px" viewBox="0 0 16 16"><rect x="1.5" y="1.5" width="13" height="13" stroke="#111" stroke-width="1.1" fill="none"/><path d="M5 3 V11 H12 M3.5 5 L5 3 L6.5 5 M10 9.5 L12 11 L10 12.5 M3 8 H8" stroke="#111" stroke-width="1.1" fill="none"/></svg>
<svg class="a" style="left:84px;top:171px;width:15px;height:7px" viewBox="0 0 15 7"><path d="M4 0 H15 L11 7 H0 Z" fill="#111"/></svg>
<svg class="a" style="left:110px;top:167px;width:16px;height:16px" viewBox="0 0 16 16"><path d="M2 8 L5 2 L8 8 Z" stroke="#111" stroke-width="1.1" fill="none"/><rect x="7" y="1" width="7" height="7" stroke="#111" stroke-width="1.1" fill="none"/><circle cx="7" cy="11" r="4" stroke="#111" stroke-width="1.1" fill="none"/></svg>
<svg class="a" style="left:136px;top:167px;width:16px;height:16px" viewBox="0 0 16 16"><rect x="1.5" y="1.5" width="13" height="13" stroke="#111" stroke-width="1.1" fill="none"/><path d="M1.5 14.5 L5 9 L8 11 L11 6 L14.5 14.5 Z" fill="#111"/><circle cx="12" cy="4" r="1.5" fill="#111"/></svg>
<svg class="a" style="left:162px;top:167px;width:16px;height:16px" viewBox="0 0 16 16"><rect x="1.5" y="2" width="13" height="12.5" stroke="#111" stroke-width="1.1" fill="none"/><path d="M4 9 V13 H7 M9 9 H13 M10 8 L9 9 L10 10 M11 2 V5 H14" stroke="#111" stroke-width="1.1" fill="none"/></svg>
<div class="a" style="left:27px;top:187px;width:299px;height:1px;background:#bdbdbd;"></div>
<div class="a" style="left:27px;top:188px;width:299px;height:22px;background:#fff;"></div>
<div class="a" style="left:179px;top:188px;width:1px;height:22px;background:#d0d0d0;"></div>
<div class="a" style="left:30px;top:190px;width:22px;height:16px;background:#000;"></div>
<span class="a" style="left:37px;top:193px;font-size:12px;color:#fff;white-space:nowrap;line-height:1;">0</span>
<span class="a" style="left:54px;top:193px;font-size:11.8px;color:#1e1e1e;white-space:nowrap;line-height:1;">Системный вид...</span>
<svg class="a" style="left:160px;top:195px;width:9px;height:6px" viewBox="0 0 9 6"><path d="M0 0 H9 L4.5 6Z" fill="#222"/></svg>
<div class="a" style="left:182px;top:190px;width:22px;height:16px;background:#000;"></div>
<span class="a" style="left:189px;top:193px;font-size:12px;color:#fff;white-space:nowrap;line-height:1;">0</span>
<span class="a" style="left:206px;top:193px;font-size:11.8px;color:#1e1e1e;white-space:nowrap;line-height:1;">Системный слой</span>
<svg class="a" style="left:312px;top:195px;width:9px;height:6px" viewBox="0 0 9 6"><path d="M0 0 H9 L4.5 6Z" fill="#222"/></svg>
<div class="a" style="left:27px;top:210px;width:299px;height:1.5px;background:#333;"></div>
<div class="a" style="left:27px;top:211px;width:299px;height:26px;background:#fff;"></div>
<div class="a" style="left:27px;top:211px;width:26px;height:26px;background:#f0f0f0;"></div>
<svg class="a" style="left:32px;top:215px;width:16px;height:16px" viewBox="0 0 16 16"><path d="M0 0 H16 L10 8 V16 H6 V8 Z" fill="#222"/></svg>
<svg class="a" style="left:61px;top:216px;width:12px;height:13px" viewBox="0 0 12 13"><circle cx="7.5" cy="4.5" r="3.5" fill="none" stroke="#aaa" stroke-width="1.1"/><path d="M5 7.5 L1 12" stroke="#aaa" stroke-width="1.4"/></svg>
<div class="a" style="left:27px;top:236px;width:299px;height:1px;background:#6e6e6e;"></div>
<div class="a" style="left:27px;top:237px;width:130px;height:53px;background:#e5e5e5;"></div>
<div class="a" style="left:27px;top:263px;width:299px;height:1px;background:#e8e8e8;"></div>
<div class="a" style="left:27px;top:290px;width:299px;height:1.5px;background:#555;"></div>
<div class="a" style="left:27px;top:291px;width:130px;height:26px;background:#e5e5e5;"></div>
<div class="a" style="left:27px;top:317px;width:299px;height:1px;background:#e8e8e8;"></div>
<svg class="a" style="left:181px;top:242px;width:16px;height:16px" viewBox="0 0 16 16"><g stroke="#111" stroke-width="1.25" fill="none"><rect x="0.9" y="2.6" width="14.6" height="12.8"/><rect x="8.6" y="12.3" width="6.9" height="3.1"/><rect x="9.6" y="4.3" width="2.9" height="6.3"/><path d="M4.6 5.7 H9.6 M4.6 9.3 H9.6"/></g><path d="M2 7.5 L3.4 6.1 L4.8 7.5 L3.4 8.9Z" fill="#111"/><circle cx="6.9" cy="7.5" r="0.8" fill="#111"/></svg>
<div class="a" style="left:199px;top:237px;width:127px;height:80px;overflow:hidden">
<span class="a" style="left:0px;top:8px;font-size:11.6px;color:#1e1e1e;white-space:nowrap;line-height:1;letter-spacing:-0.3px">TKTTC0.23.02.07.TO-1-17</span>
<span class="a" style="left:0px;top:36px;font-size:11.8px;color:#1e1e1e;white-space:nowrap;line-height:1;">Листы</span>
</div>
<svg class="a" style="left:171px;top:275px;width:5px;height:6px" viewBox="0 0 5 6"><path d="M0 0 L5 3 L0 6Z" fill="#222"/></svg>
<svg class="a" style="left:181px;top:269px;width:16px;height:15px" viewBox="0 0 16 15"><path d="M0.5 2 H6 L7 3.5 H15.5 V14.5 H0.5 Z" fill="#222"/><rect x="3" y="7" width="10" height="5" fill="#f0f0f0"/><rect x="8" y="9" width="5" height="3" fill="#222"/></svg>
<svg class="a" style="left:33px;top:298px;width:14px;height:10px" viewBox="0 0 14 10"><path d="M0.5 5 Q7 -2 13.5 5 Q7 12 0.5 5Z" fill="none" stroke="#222" stroke-width="1.3"/><circle cx="7" cy="5" r="2" fill="#222"/></svg>
<svg class="a" style="left:59px;top:295px;width:14px;height:15px" viewBox="0 0 14 15"><path d="M1 4 V1 H6 V5" stroke="#222" stroke-width="1.3" fill="none"/><rect x="3" y="6" width="10" height="8" fill="#222"/><rect x="6" y="8" width="3" height="4" fill="#f0f0f0"/></svg>
<div class="a" style="left:105px;top:291px;width:26px;height:26px;background:#000;"></div>
<span class="a" style="left:114px;top:294px;font-size:11px;color:#fff;white-space:nowrap;line-height:1;">0</span>
<svg class="a" style="left:114px;top:306px;width:8px;height:8px" viewBox="0 0 8 8"><circle cx="4" cy="4" r="3" fill="#fff"/></svg>
<svg class="a" style="left:171px;top:301px;width:5px;height:6px" viewBox="0 0 5 6"><path d="M0 0 L5 3 L0 6Z" fill="#222"/></svg>
<svg class="a" style="left:181px;top:295px;width:16px;height:16px" viewBox="0 0 16 16"><rect x="1.5" y="1.5" width="13" height="13" stroke="#111" stroke-width="1.1" fill="none"/><path d="M5 3 V11 H12 M3.5 5 L5 3 L6.5 5 M10 9.5 L12 11 L10 12.5 M3 8 H8" stroke="#111" stroke-width="1.1" fill="none"/></svg>
<svg class="a" style="left:203px;top:300px;width:8px;height:8px" viewBox="0 0 8 8"><circle cx="4" cy="4" r="3.5" fill="#111"/></svg>
<div class="a" style="left:213px;top:291px;width:113px;height:26px;overflow:hidden">
<span class="a" style="left:0px;top:7px;font-size:12px;color:#111;white-space:nowrap;line-height:1;font-weight:bold">Системный вид (1:1</span>
</div>
<div class="a" style="left:326px;top:291px;width:1px;height:26px;background:#6e6e6e;"></div>
<div class="a" style="left:27px;top:819.5px;width:299px;height:1.5px;background:#777;"></div>
<div class="a" style="left:624px;top:145px;width:673px;height:25px;background:#f0f0f0;border:1px solid #7a7a7a;border-top:none"></div>
<div class="a" style="left:625px;top:145px;width:15px;height:24px;background:#dcdcdc;"></div>
<svg class="a" style="left:627px;top:148px;width:11px;height:5px" viewBox="0 0 11 5"><g fill="#222"><rect x="0" y="0" width="2" height="2"/><rect x="3" y="0" width="2" height="2"/><rect x="6" y="0" width="2" height="2"/><rect x="9" y="0" width="2" height="2"/><rect x="0" y="3" width="2" height="2"/><rect x="3" y="3" width="2" height="2"/><rect x="6" y="3" width="2" height="2"/><rect x="9" y="3" width="2" height="2"/></g></svg>
<div class="a" style="left:640px;top:145px;width:47px;height:24px;background:#4a4a4a;"></div>
<svg class="a" style="left:645px;top:149px;width:18px;height:17px" viewBox="0 0 18 17"><g stroke="#fff" stroke-width="2.2" fill="none"><path d="M3 11 L10 3 Q13 0 16 3 Q18 6 15 9 L8 16"/><path d="M6 10 L11 5 Q13 4 14 6 L9 12"/></g></svg>
<svg class="a" style="left:673px;top:154px;width:9px;height:6px" viewBox="0 0 9 6"><path d="M0 0 H9 L4.5 6Z" fill="#fff"/></svg>
<div class="a" style="left:688px;top:145px;width:1px;height:24px;background:#9a9a9a;"></div>
<svg class="a" style="left:694px;top:149px;width:17px;height:16px" viewBox="0 0 17 16"><g stroke="#222" stroke-width="1.1" fill="none"><path d="M1 8 L8 1 M4 10 L11 3 M9 15 H17 M13 9 V15"/></g></svg>
<svg class="a" style="left:722px;top:148px;width:17px;height:17px" viewBox="0 0 17 17"><g stroke="#222" stroke-width="1.1" fill="none"><path d="M1 14 L8 7 M3 16 L10 9 M8 16 H16 M12 10 V16"/><path d="M6 4 Q11 -1 16 4 Q11 9 6 4Z"/><circle cx="11" cy="4" r="1.3" fill="#222"/></g></svg>
<svg class="a" style="left:750px;top:148px;width:17px;height:17px" viewBox="0 0 17 17"><g stroke="#222" stroke-width="1.1" fill="none"><path d="M3 9 V16 H12 M1 11 L3 9 L5 11 M10 14 L12 16 L10 18"/><path d="M6 4 Q11 -1 16 4 Q11 9 6 4Z"/><circle cx="11" cy="4" r="1.3" fill="#222"/></g></svg>
<div class="a" style="left:771px;top:145px;width:1px;height:24px;background:#8a8a8a;"></div>
<div class="a" style="left:772px;top:145px;width:28px;height:24px;background:#e4e4e4;"></div>
<svg class="a" style="left:777px;top:149px;width:16px;height:16px" viewBox="0 0 16 16"><g stroke="#222" stroke-width="1.6"><path d="M4 0 V16 M8 0 V16 M12 0 V16 M0 4 H16 M0 8 H16 M0 12 H16"/></g></svg>
<div class="a" style="left:800px;top:145px;width:80px;height:24px;background:#fff;"></div>
<svg class="a" style="left:802px;top:148px;width:16px;height:18px" viewBox="0 0 16 18"><g stroke="#222" stroke-width="1.1" fill="none"><path d="M3 2 V14 H15 M1 4 L3 1.5 L5 4 M12 12 L15 14 L12 16"/><circle cx="3" cy="14.5" r="1.8"/></g></svg>
<span class="a" style="left:820px;top:152px;font-size:12px;color:#222;white-space:nowrap;line-height:1;">СК 0</span>
<svg class="a" style="left:866px;top:154px;width:8px;height:5px" viewBox="0 0 8 5"><path d="M0 0 H8 L4 5Z" fill="#222"/></svg>
<div class="a" style="left:880px;top:145px;width:27px;height:24px;background:#e8e8e8;"></div>
<svg class="a" style="left:886px;top:149px;width:15px;height:15px" viewBox="0 0 15 15"><path d="M0 14 H6 V1 H15" stroke="#222" stroke-width="1.3" fill="none"/></svg>
<div class="a" style="left:907px;top:145px;width:27px;height:24px;background:#4a4a4a;"></div>
<svg class="a" style="left:912px;top:149px;width:17px;height:17px" viewBox="0 0 17 17"><g stroke="#fff" stroke-width="1.2" fill="none"><circle cx="3" cy="12" r="2"/><circle cx="14" cy="4" r="2"/><path d="M5 11 L12 5 M3 3 L5 5 L3 7 L1 5Z M14 10 L16 12 L14 14 L12 12Z"/></g></svg>
<div class="a" style="left:934px;top:145px;width:71px;height:24px;background:#fff;"></div>
<svg class="a" style="left:938px;top:149px;width:16px;height:17px" viewBox="0 0 16 17"><g stroke="#222" stroke-width="1.1" fill="none"><path d="M2 2 V15 H14 V2 M0 4 L2 1 L4 4 M12 4 L14 1 L16 4 M10 13 L14 15 L10 17"/></g></svg>
<span class="a" style="left:957px;top:152px;font-size:12px;color:#222;white-space:nowrap;line-height:1;">1</span>
<svg class="a" style="left:993px;top:154px;width:8px;height:5px" viewBox="0 0 8 5"><path d="M0 0 H8 L4 5Z" fill="#222"/></svg>
<div class="a" style="left:1005px;top:145px;width:48px;height:24px;background:#e4e4e4;"></div>
<svg class="a" style="left:1011px;top:149px;width:16px;height:16px" viewBox="0 0 16 16"><g stroke="#222" stroke-width="1.2" fill="none"><circle cx="6" cy="6" r="5"/><path d="M9.5 9.5 L14 14" stroke-width="2"/><path d="M9 1 H15 V7" stroke-dasharray="1,1"/></g></svg>
<svg class="a" style="left:1039px;top:154px;width:8px;height:5px" viewBox="0 0 8 5"><path d="M0 0 H8 L4 5Z" fill="#222"/></svg>
<div class="a" style="left:1053px;top:145px;width:72px;height:24px;background:#fff;"></div>
<svg class="a" style="left:1056px;top:149px;width:16px;height:16px" viewBox="0 0 16 16"><g stroke="#222" stroke-width="1.2" fill="none"><circle cx="6" cy="6" r="5"/><path d="M9.5 9.5 L14 14" stroke-width="2"/><path d="M3.5 6 H8.5 M6 3.5 V8.5"/></g></svg>
<div class="a" style="left:1077px;top:145px;width:24px;height:24px;overflow:hidden">
<span class="a" style="left:0px;top:8px;font-size:11.2px;color:#222;white-space:nowrap;line-height:1;">0.786</span>
</div>
<svg class="a" style="left:1111px;top:154px;width:8px;height:5px" viewBox="0 0 8 5"><path d="M0 0 H8 L4 5Z" fill="#222"/></svg>
<div class="a" style="left:1125px;top:145px;width:13px;height:24px;background:#dadada;"></div>
<span class="a" style="left:1127px;top:153px;font-size:11.5px;color:#555;white-space:nowrap;line-height:1;">X</span>
<div class="a" style="left:1138px;top:145px;width:45px;height:24px;background:#fff;"></div>
<div class="a" style="left:1140px;top:145px;width:42px;height:24px;overflow:hidden">
<span class="a" style="left:0px;top:8px;font-size:11.2px;color:#222;white-space:nowrap;line-height:1;">225.9543</span>
</div>
<div class="a" style="left:1183px;top:145px;width:13px;height:24px;background:#dadada;"></div>
<span class="a" style="left:1185px;top:153px;font-size:11.5px;color:#555;white-space:nowrap;line-height:1;">Y</span>
<div class="a" style="left:1196px;top:145px;width:45px;height:24px;background:#fff;"></div>
<div class="a" style="left:1198px;top:145px;width:42px;height:24px;overflow:hidden">
<span class="a" style="left:0px;top:8px;font-size:11.2px;color:#222;white-space:nowrap;line-height:1;">318.3015</span>
</div>
<svg class="a" style="left:1247px;top:148px;width:17px;height:18px" viewBox="0 0 17 18"><g stroke="#222" stroke-width="1.2" fill="none"><path d="M2 1 H16 M4 1 V10 M13 1 V17 M10 1 V17 M1 11 H9 V17 H1 Z M1 14 H9 M5 11 V17"/></g></svg>
<svg class="a" style="left:1274px;top:148px;width:18px;height:18px" viewBox="0 0 18 18"><g stroke="#222" stroke-width="1.2" fill="none"><path d="M1 17 L3 13 L11 5 L13 7 L5 15 Z"/><path d="M10 4 L13 1 Q15 0 17 2 Q18 4 16 5 L14 8Z" fill="#222"/></g></svg>
<div class="a" style="left:0px;top:1040px;width:1920px;height:40px;background:#232323;"></div>
<svg class="a" style="left:16px;top:1052px;width:16px;height:16px" viewBox="0 0 16 16"><g fill="#fff"><rect x="0" y="0" width="7.5" height="7.5"/><rect x="8.5" y="0" width="7.5" height="7.5"/><rect x="0" y="8.5" width="7.5" height="7.5"/><rect x="8.5" y="8.5" width="7.5" height="7.5"/></g></svg>
<div class="a" style="left:48px;top:1040px;width:344px;height:40px;background:#f0f0f0;border-top:1px solid #cfcfcf"></div>
<svg class="a" style="left:60px;top:1052px;width:16px;height:16px" viewBox="0 0 16 16"><circle cx="10" cy="6" r="4.8" fill="none" stroke="#222" stroke-width="1.2"/><path d="M6.5 9.5 L1 15" stroke="#222" stroke-width="1.3"/></svg>
<span class="a" style="left:88px;top:1053px;font-size:14.6px;color:#222;white-space:nowrap;line-height:1;">Введите здесь текст для поиска</span>
<svg class="a" style="left:407px;top:1052px;width:18px;height:16px" viewBox="0 0 18 16"><g stroke="#fff" stroke-width="1.2" fill="none"><rect x="2" y="4" width="10" height="8"/><path d="M0 2 H14 M0 14 H14 M16 2 V5 M16 7 V14"/></g></svg>
<svg class="a" style="left:455px;top:1048px;width:23px;height:24px" viewBox="0 0 23 24"><path d="M1 7 H22 V23 H1Z" fill="#f4f4f4"/><path d="M7 7 V4 Q7 1 11.5 1 Q16 1 16 4 V7" stroke="#f4f4f4" stroke-width="1.5" fill="none"/><rect x="8" y="11" width="3" height="3" fill="#f35325"/><rect x="12" y="11" width="3" height="3" fill="#81bc06"/><rect x="8" y="15" width="3" height="3" fill="#05a6f0"/><rect x="12" y="15" width="3" height="3" fill="#ffba08"/></svg>
<svg class="a" style="left:504px;top:1050px;width:24px;height:20px" viewBox="0 0 24 20"><path d="M0 6 L12 0 L24 6 V20 H0Z" fill="#0f6cbd"/><path d="M0 6 L12 13 L24 6 V20 H0Z" fill="#4aa3f0"/><path d="M0 20 L12 11 L24 20Z" fill="#2f8ce0"/></svg>
<svg class="a" style="left:553px;top:1049px;width:23px;height:22px" viewBox="0 0 23 22"><path d="M0 1 H8 L10 3 H23 V20 H0Z" fill="#e8a91c"/><rect x="0" y="5" width="23" height="15" fill="#ffd35b"/><rect x="7" y="13" width="10" height="7" fill="#3b8ed8"/><rect x="9" y="16" width="6" height="4" fill="#ffd35b"/></svg>
<div class="a" style="left:545px;top:1078px;width:40px;height:2px;background:#9a9a9a;"></div>
<svg class="a" style="left:602px;top:1048px;width:24px;height:24px" viewBox="0 0 24 24"><ellipse cx="12" cy="12" rx="10.5" ry="11" fill="none" stroke="#d9233d" stroke-width="2.2"/><ellipse cx="12" cy="12" rx="5" ry="9" fill="none" stroke="#d9233d" stroke-width="1.5"/></svg>
<div class="a" style="left:594px;top:1078px;width:40px;height:2px;background:#9a9a9a;"></div>
<svg class="a" style="left:651px;top:1048px;width:23px;height:24px" viewBox="0 0 23 24"><rect width="23" height="24" fill="#3a2a1e"/><rect x="1" y="1" width="21" height="22" fill="#b08a62"/><ellipse cx="11.5" cy="13" rx="7.5" ry="9" fill="#d9b48c"/><rect x="3.5" y="8" width="16" height="4" fill="#1a1a1a"/><ellipse cx="11.5" cy="18" rx="2.5" ry="2.2" fill="#6a3020"/><path d="M1 1 H22 V6 Q12 2 1 6Z" fill="#e8dcc0"/></svg>
<svg class="a" style="left:700px;top:1048px;width:24px;height:24px" viewBox="0 0 24 24"><defs><linearGradient id="edg" x1="0" y1="1" x2="1" y2="0"><stop offset="0" stop-color="#0c59a8"/><stop offset="0.55" stop-color="#1f9be0"/><stop offset="1" stop-color="#5fd46a"/></linearGradient></defs><circle cx="12" cy="12" r="11.5" fill="url(#edg)"/><path d="M7 14 Q8 8 14 8 Q19 8.5 19 12 Q19 14.5 15 14.5 Q11.5 14.5 12 17 Q12.5 20.5 18 20" fill="none" stroke="#232323" stroke-width="2.4" opacity="0.85"/></svg>
<svg class="a" style="left:749px;top:1048px;width:23px;height:23px" viewBox="0 0 23 23"><circle cx="11.5" cy="11.5" r="11.5" fill="#1b3a66"/><circle cx="15" cy="8.5" r="4" fill="none" stroke="#fff" stroke-width="1.5"/><path d="M1 12 L9 15.5" stroke="#fff" stroke-width="3"/><circle cx="9" cy="15.5" r="2.5" fill="#fff"/></svg>
<div class="a" style="left:786px;top:1040px;width:48px;height:40px;background:#9a5218;"></div>
<svg class="a" style="left:797px;top:1048px;width:24px;height:24px" viewBox="0 0 24 24"><circle cx="12" cy="12" r="12" fill="#1ed760"/><path d="M5 8.5 Q12 6 19 9.5 M6 12.5 Q12 10.5 18 13 M7 16 Q12 14.5 16.5 16.5" stroke="#111" stroke-width="2" fill="none" stroke-linecap="round"/></svg>
<div class="a" style="left:786px;top:1077px;width:48px;height:3px;background:#f0862a;"></div>
<div class="a" style="left:834px;top:1040px;width:49px;height:40px;background:#333;"></div>
<svg class="a" style="left:847px;top:1048px;width:24px;height:24px" viewBox="0 0 24 24"><rect x="0.5" y="0.5" width="23" height="23" fill="#1a3242" stroke="#3aa8d8"/><circle cx="12" cy="12" r="9" fill="none" stroke="#3aa8d8" stroke-width="1.3"/><path d="M9 5 V19 M9 12 L15 6 M11 10 L17 17" stroke="#3aa8d8" stroke-width="1.3" fill="none"/></svg>
<div class="a" style="left:834px;top:1078px;width:49px;height:2px;background:#9a9a9a;"></div>
<svg class="a" style="left:1747px;top:1057px;width:12px;height:8px" viewBox="0 0 12 8"><path d="M0.5 7.5 L6 1.5 L11.5 7.5" stroke="#fff" stroke-width="1.2" fill="none"/></svg>
<svg class="a" style="left:1768px;top:1051px;width:17px;height:17px" viewBox="0 0 17 17"><g stroke="#fff" stroke-width="1.1" fill="none"><path d="M1 6 H4 L8 2 V15 L4 11 H1Z M10 6 Q12 8.5 10 11 M12 4 Q15.5 8.5 12 13 M14 2 Q19 8.5 14 15"/></g></svg>
<svg class="a" style="left:1792px;top:1051px;width:17px;height:17px" viewBox="0 0 17 17"><g stroke="#fff" stroke-width="1.1" fill="none"><rect x="3" y="2" width="13" height="9"/><path d="M9 11 V14 M5 14.5 H13 M1 1 V7"/></g></svg>
<span class="a" style="left:1820px;top:1055px;font-size:12.5px;color:#fff;white-space:nowrap;line-height:1;transform:scaleX(0.87);transform-origin:0 0">РУС</span>
<span class="a" style="left:1868px;top:1045px;font-size:12.5px;color:#fff;white-space:nowrap;line-height:1;transform:scaleX(0.87);transform-origin:0 0">20:16</span>
<span class="a" style="left:1855px;top:1062px;font-size:12.5px;color:#fff;white-space:nowrap;line-height:1;transform:scaleX(0.85);transform-origin:0 0">05.06.2021</span>
<div class="a" style="left:1914px;top:1040px;width:1px;height:40px;background:#5a5a5a;"></div>
</body></html>
